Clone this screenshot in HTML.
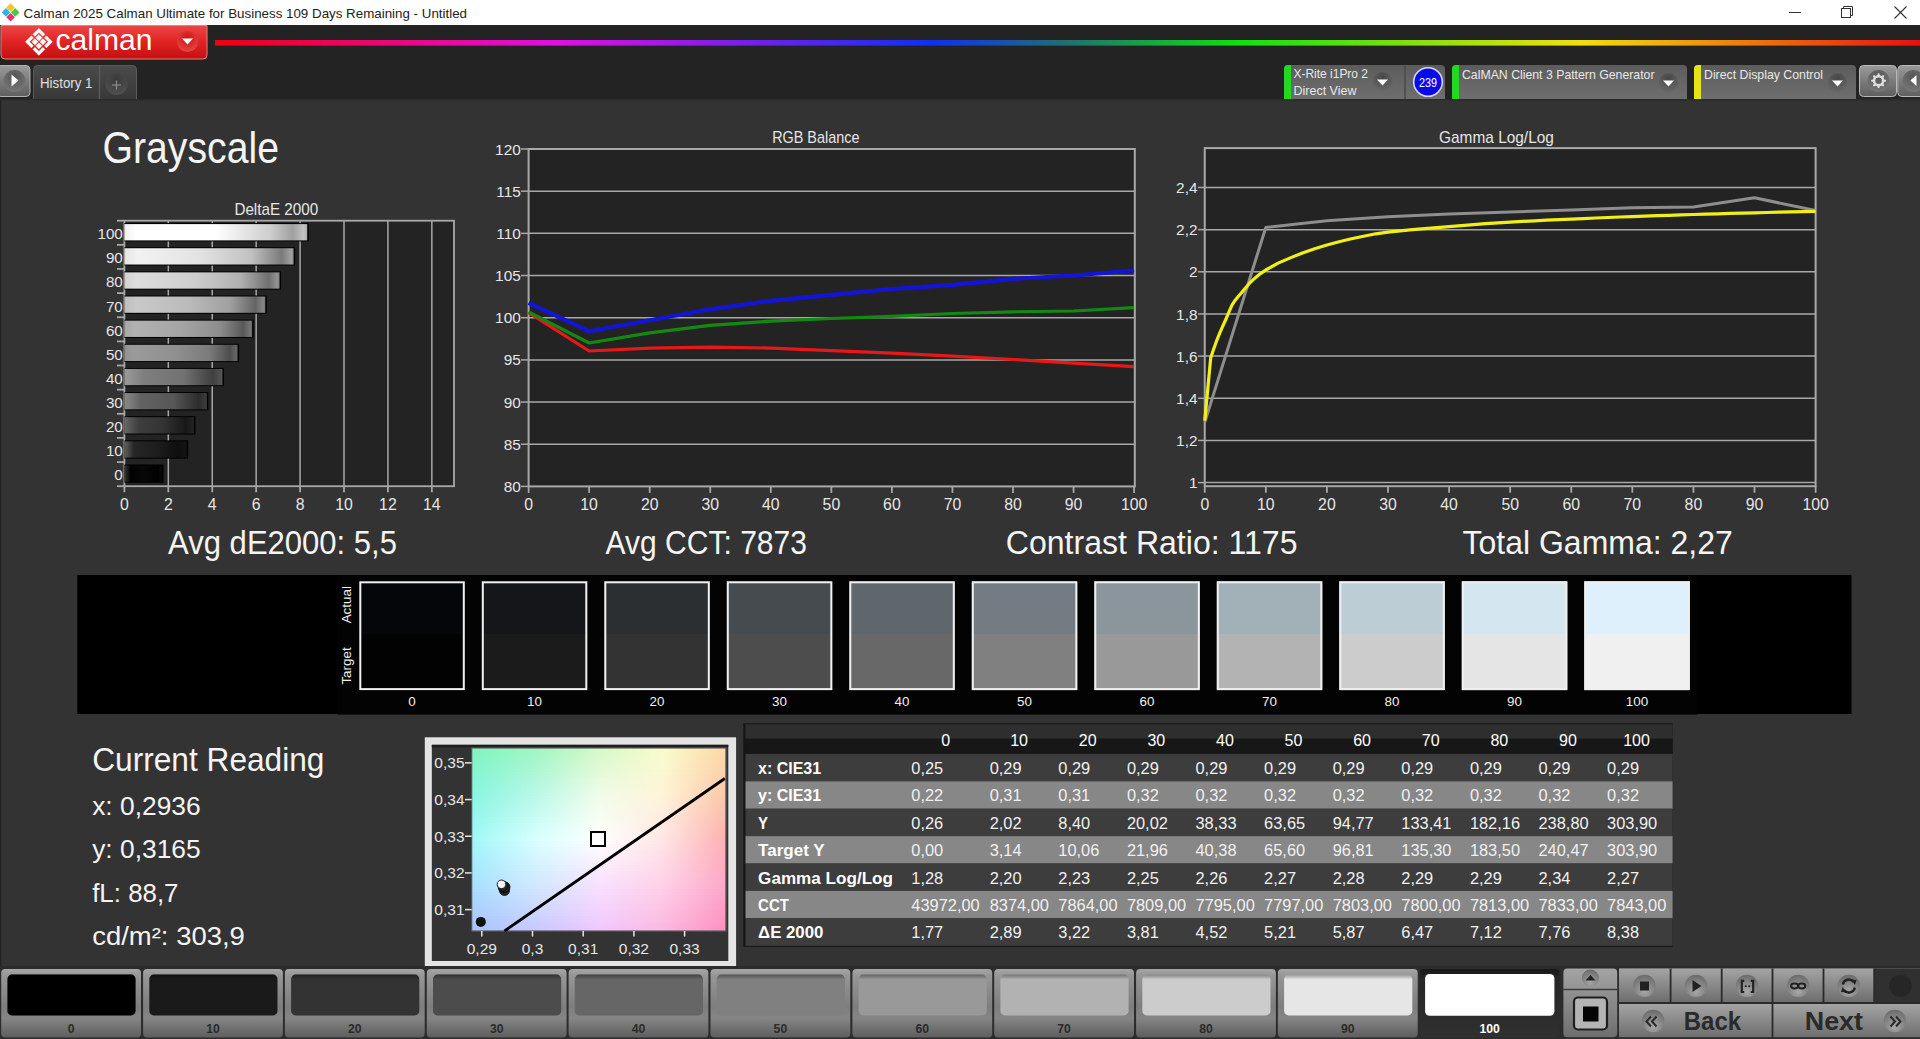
<!DOCTYPE html><html><head><meta charset="utf-8"><style>html,body{margin:0;padding:0;background:#333;overflow:hidden;width:1920px;height:1039px}svg{display:block;position:absolute;left:0;top:0}text{font-family:"Liberation Sans", sans-serif}</style></head><body><svg width="1920" height="1039" viewBox="0 0 1920 1039" font-family='"Liberation Sans", sans-serif'><defs><linearGradient id="gRed" x1="0" y1="0" x2="0" y2="1"><stop offset="0" stop-color="#ec4646"/><stop offset="0.5" stop-color="#e02222"/><stop offset="1" stop-color="#c41010"/></linearGradient><radialGradient id="gRedBtn" cx="0.5" cy="0.35" r="0.6"><stop offset="0" stop-color="#c81414"/><stop offset="1" stop-color="#e84040"/></radialGradient><linearGradient id="gRain" x1="215" y1="0" x2="1920" y2="0" gradientUnits="userSpaceOnUse"><stop offset="0" stop-color="#f00010"/><stop offset="0.2" stop-color="#e010e0"/><stop offset="0.42" stop-color="#1030f0"/><stop offset="0.5" stop-color="#207070"/><stop offset="0.6" stop-color="#10e010"/><stop offset="0.8" stop-color="#f0e010"/><stop offset="1" stop-color="#e81010"/></linearGradient><linearGradient id="gBtnGray" x1="0" y1="0" x2="0" y2="1"><stop offset="0" stop-color="#9a9a9a"/><stop offset="1" stop-color="#5e5e5e"/></linearGradient><radialGradient id="gCircDark" cx="0.5" cy="0.3" r="0.7"><stop offset="0" stop-color="#555"/><stop offset="1" stop-color="#777"/></radialGradient><linearGradient id="gTab" x1="0" y1="0" x2="0" y2="1"><stop offset="0" stop-color="#4a4a4a"/><stop offset="1" stop-color="#383838"/></linearGradient><radialGradient id="gCircTab" cx="0.5" cy="0.3" r="0.7"><stop offset="0" stop-color="#3a3a3a"/><stop offset="1" stop-color="#505050"/></radialGradient><linearGradient id="gDev" x1="0" y1="0" x2="0" y2="1"><stop offset="0" stop-color="#5c5c5c"/><stop offset="1" stop-color="#6e6e6e"/></linearGradient><radialGradient id="gDrop" cx="0.5" cy="0.25" r="0.75"><stop offset="0" stop-color="#474747"/><stop offset="1" stop-color="#6a6a6a"/></radialGradient><linearGradient id="gBar0" x1="0" y1="0" x2="1" y2="0"><stop offset="0" stop-color="#3c3c3c"/><stop offset="0.06" stop-color="#232323"/><stop offset="0.16" stop-color="#020202"/><stop offset="0.5" stop-color="#080808"/><stop offset="0.9" stop-color="#000000"/><stop offset="1" stop-color="#0c0c0c"/></linearGradient><linearGradient id="gBar1" x1="0" y1="0" x2="1" y2="0"><stop offset="0" stop-color="#5f5f5f"/><stop offset="0.04" stop-color="#525252"/><stop offset="0.15" stop-color="#262626"/><stop offset="0.5" stop-color="#1e1e1e"/><stop offset="0.85" stop-color="#0e0e0e"/><stop offset="1" stop-color="#141414"/></linearGradient><linearGradient id="gBar2" x1="0" y1="0" x2="1" y2="0"><stop offset="0" stop-color="#6c6c6c"/><stop offset="0.05" stop-color="#5c5c5c"/><stop offset="0.2" stop-color="#3e3e3e"/><stop offset="0.55" stop-color="#343434"/><stop offset="0.88" stop-color="#181818"/><stop offset="1" stop-color="#242424"/></linearGradient><linearGradient id="gBar3" x1="0" y1="0" x2="1" y2="0"><stop offset="0" stop-color="#878787"/><stop offset="0.05" stop-color="#808080"/><stop offset="0.2" stop-color="#626262"/><stop offset="0.6" stop-color="#565656"/><stop offset="0.9" stop-color="#2c2c2c"/><stop offset="1" stop-color="#3e3e3e"/></linearGradient><linearGradient id="gBar4" x1="0" y1="0" x2="1" y2="0"><stop offset="0" stop-color="#989898"/><stop offset="0.05" stop-color="#949494"/><stop offset="0.2" stop-color="#7e7e7e"/><stop offset="0.6" stop-color="#727272"/><stop offset="0.9" stop-color="#404040"/><stop offset="1" stop-color="#565656"/></linearGradient><linearGradient id="gBar5" x1="0" y1="0" x2="1" y2="0"><stop offset="0" stop-color="#929292"/><stop offset="0.08" stop-color="#9a9a9a"/><stop offset="0.45" stop-color="#909090"/><stop offset="0.75" stop-color="#7b7b7b"/><stop offset="0.93" stop-color="#4e4e4e"/><stop offset="0.985" stop-color="#666666"/><stop offset="1" stop-color="#5a5a5a"/></linearGradient><linearGradient id="gBar6" x1="0" y1="0" x2="1" y2="0"><stop offset="0" stop-color="#a7a7a7"/><stop offset="0.08" stop-color="#b1b1b1"/><stop offset="0.45" stop-color="#a5a5a5"/><stop offset="0.75" stop-color="#8d8d8d"/><stop offset="0.93" stop-color="#595959"/><stop offset="0.985" stop-color="#757575"/><stop offset="1" stop-color="#676767"/></linearGradient><linearGradient id="gBar7" x1="0" y1="0" x2="1" y2="0"><stop offset="0" stop-color="#bdbdbd"/><stop offset="0.08" stop-color="#c9c9c9"/><stop offset="0.45" stop-color="#bbbbbb"/><stop offset="0.75" stop-color="#a0a0a0"/><stop offset="0.93" stop-color="#656565"/><stop offset="0.985" stop-color="#858585"/><stop offset="1" stop-color="#757575"/></linearGradient><linearGradient id="gBar8" x1="0" y1="0" x2="1" y2="0"><stop offset="0" stop-color="#d1d1d1"/><stop offset="0.08" stop-color="#dddddd"/><stop offset="0.45" stop-color="#cecece"/><stop offset="0.75" stop-color="#b0b0b0"/><stop offset="0.93" stop-color="#707070"/><stop offset="0.985" stop-color="#929292"/><stop offset="1" stop-color="#818181"/></linearGradient><linearGradient id="gBar9" x1="0" y1="0" x2="1" y2="0"><stop offset="0" stop-color="#e4e4e4"/><stop offset="0.08" stop-color="#f2f2f2"/><stop offset="0.45" stop-color="#e2e2e2"/><stop offset="0.75" stop-color="#c1c1c1"/><stop offset="0.93" stop-color="#7a7a7a"/><stop offset="0.985" stop-color="#a0a0a0"/><stop offset="1" stop-color="#8d8d8d"/></linearGradient><linearGradient id="gBar10" x1="0" y1="0" x2="1" y2="0"><stop offset="0" stop-color="#f0f0f0"/><stop offset="0.06" stop-color="#ffffff"/><stop offset="0.5" stop-color="#ffffff"/><stop offset="0.8" stop-color="#cdcdcd"/><stop offset="0.92" stop-color="#a0a0a0"/><stop offset="0.98" stop-color="#c3c3c3"/><stop offset="1" stop-color="#afafaf"/></linearGradient><linearGradient id="gCie0" x1="0" y1="0" x2="1" y2="0"><stop offset="0" stop-color="#7ff5c1"/><stop offset="0.25" stop-color="#a1f5c1"/><stop offset="0.5" stop-color="#d6f8c9"/><stop offset="0.75" stop-color="#f8fccc"/><stop offset="1.0" stop-color="#fcd8a6"/></linearGradient><linearGradient id="gCie1" x1="0" y1="0" x2="1" y2="0"><stop offset="0" stop-color="#80f5c3"/><stop offset="0.25" stop-color="#a2f5c4"/><stop offset="0.5" stop-color="#d8f8cb"/><stop offset="0.75" stop-color="#f9fbcd"/><stop offset="1.0" stop-color="#fcd7a6"/></linearGradient><linearGradient id="gCie2" x1="0" y1="0" x2="1" y2="0"><stop offset="0" stop-color="#80f5c5"/><stop offset="0.25" stop-color="#a4f5c7"/><stop offset="0.5" stop-color="#d9f9cd"/><stop offset="0.75" stop-color="#f9fbce"/><stop offset="1.0" stop-color="#fcd6a6"/></linearGradient><linearGradient id="gCie3" x1="0" y1="0" x2="1" y2="0"><stop offset="0" stop-color="#81f5c7"/><stop offset="0.25" stop-color="#a6f6c9"/><stop offset="0.5" stop-color="#dbf9cf"/><stop offset="0.75" stop-color="#fafacf"/><stop offset="1.0" stop-color="#fcd5a6"/></linearGradient><linearGradient id="gCie4" x1="0" y1="0" x2="1" y2="0"><stop offset="0" stop-color="#82f5c9"/><stop offset="0.25" stop-color="#a7f6cc"/><stop offset="0.5" stop-color="#ddf9d1"/><stop offset="0.75" stop-color="#fafad0"/><stop offset="1.0" stop-color="#fcd4a7"/></linearGradient><linearGradient id="gCie5" x1="0" y1="0" x2="1" y2="0"><stop offset="0" stop-color="#82f5cc"/><stop offset="0.25" stop-color="#a9f6ce"/><stop offset="0.5" stop-color="#dff9d4"/><stop offset="0.75" stop-color="#fbf9d0"/><stop offset="1.0" stop-color="#fcd3a7"/></linearGradient><linearGradient id="gCie6" x1="0" y1="0" x2="1" y2="0"><stop offset="0" stop-color="#83f5ce"/><stop offset="0.25" stop-color="#aaf6d1"/><stop offset="0.5" stop-color="#e1fad6"/><stop offset="0.75" stop-color="#fbf9d1"/><stop offset="1.0" stop-color="#fcd2a7"/></linearGradient><linearGradient id="gCie7" x1="0" y1="0" x2="1" y2="0"><stop offset="0" stop-color="#83f5d0"/><stop offset="0.25" stop-color="#acf6d4"/><stop offset="0.5" stop-color="#e2fad8"/><stop offset="0.75" stop-color="#fbf8d2"/><stop offset="1.0" stop-color="#fcd1a7"/></linearGradient><linearGradient id="gCie8" x1="0" y1="0" x2="1" y2="0"><stop offset="0" stop-color="#84f5d2"/><stop offset="0.25" stop-color="#adf7d6"/><stop offset="0.5" stop-color="#e4fada"/><stop offset="0.75" stop-color="#fcf8d3"/><stop offset="1.0" stop-color="#fcd0a7"/></linearGradient><linearGradient id="gCie9" x1="0" y1="0" x2="1" y2="0"><stop offset="0" stop-color="#85f5d4"/><stop offset="0.25" stop-color="#aff7d9"/><stop offset="0.5" stop-color="#e6fadc"/><stop offset="0.75" stop-color="#fcf7d3"/><stop offset="1.0" stop-color="#fccea7"/></linearGradient><linearGradient id="gCie10" x1="0" y1="0" x2="1" y2="0"><stop offset="0" stop-color="#85f5d6"/><stop offset="0.25" stop-color="#b1f7dc"/><stop offset="0.5" stop-color="#e8fbde"/><stop offset="0.75" stop-color="#fdf6d4"/><stop offset="1.0" stop-color="#fccda7"/></linearGradient><linearGradient id="gCie11" x1="0" y1="0" x2="1" y2="0"><stop offset="0" stop-color="#86f5d8"/><stop offset="0.25" stop-color="#b2f7de"/><stop offset="0.5" stop-color="#e9fbe0"/><stop offset="0.75" stop-color="#fdf6d5"/><stop offset="1.0" stop-color="#fccca8"/></linearGradient><linearGradient id="gCie12" x1="0" y1="0" x2="1" y2="0"><stop offset="0" stop-color="#86f5da"/><stop offset="0.25" stop-color="#b4f7e1"/><stop offset="0.5" stop-color="#ebfbe2"/><stop offset="0.75" stop-color="#fef5d6"/><stop offset="1.0" stop-color="#fccba8"/></linearGradient><linearGradient id="gCie13" x1="0" y1="0" x2="1" y2="0"><stop offset="0" stop-color="#87f5dc"/><stop offset="0.25" stop-color="#b5f8e3"/><stop offset="0.5" stop-color="#edfce4"/><stop offset="0.75" stop-color="#fef5d7"/><stop offset="1.0" stop-color="#fccaa8"/></linearGradient><linearGradient id="gCie14" x1="0" y1="0" x2="1" y2="0"><stop offset="0" stop-color="#88f5de"/><stop offset="0.25" stop-color="#b7f8e6"/><stop offset="0.5" stop-color="#effce6"/><stop offset="0.75" stop-color="#fff4d7"/><stop offset="1.0" stop-color="#fcc9a8"/></linearGradient><linearGradient id="gCie15" x1="0" y1="0" x2="1" y2="0"><stop offset="0" stop-color="#88f5e0"/><stop offset="0.25" stop-color="#b9f8e8"/><stop offset="0.5" stop-color="#f0fce8"/><stop offset="0.75" stop-color="#fff4d8"/><stop offset="1.0" stop-color="#fcc8a8"/></linearGradient><linearGradient id="gCie16" x1="0" y1="0" x2="1" y2="0"><stop offset="0" stop-color="#8af5e2"/><stop offset="0.25" stop-color="#bbf9ea"/><stop offset="0.5" stop-color="#f1fcea"/><stop offset="0.75" stop-color="#fff3d9"/><stop offset="1.0" stop-color="#fcc6a9"/></linearGradient><linearGradient id="gCie17" x1="0" y1="0" x2="1" y2="0"><stop offset="0" stop-color="#8cf5e4"/><stop offset="0.25" stop-color="#bdf9eb"/><stop offset="0.5" stop-color="#f2fceb"/><stop offset="0.75" stop-color="#fff2da"/><stop offset="1.0" stop-color="#fcc4a9"/></linearGradient><linearGradient id="gCie18" x1="0" y1="0" x2="1" y2="0"><stop offset="0" stop-color="#8df6e5"/><stop offset="0.25" stop-color="#bff9ed"/><stop offset="0.5" stop-color="#f3fded"/><stop offset="0.75" stop-color="#fff1db"/><stop offset="1.0" stop-color="#fcc3aa"/></linearGradient><linearGradient id="gCie19" x1="0" y1="0" x2="1" y2="0"><stop offset="0" stop-color="#8ff6e7"/><stop offset="0.25" stop-color="#c1faee"/><stop offset="0.5" stop-color="#f4fdee"/><stop offset="0.75" stop-color="#fff0dc"/><stop offset="1.0" stop-color="#fcc1aa"/></linearGradient><linearGradient id="gCie20" x1="0" y1="0" x2="1" y2="0"><stop offset="0" stop-color="#90f6e8"/><stop offset="0.25" stop-color="#c3faf0"/><stop offset="0.5" stop-color="#f5fdf0"/><stop offset="0.75" stop-color="#ffefdd"/><stop offset="1.0" stop-color="#fcc0ab"/></linearGradient><linearGradient id="gCie21" x1="0" y1="0" x2="1" y2="0"><stop offset="0" stop-color="#92f6ea"/><stop offset="0.25" stop-color="#c5fbf1"/><stop offset="0.5" stop-color="#f6fdf1"/><stop offset="0.75" stop-color="#ffeede"/><stop offset="1.0" stop-color="#fcbeab"/></linearGradient><linearGradient id="gCie22" x1="0" y1="0" x2="1" y2="0"><stop offset="0" stop-color="#93f6eb"/><stop offset="0.25" stop-color="#c7fbf3"/><stop offset="0.5" stop-color="#f7fdf3"/><stop offset="0.75" stop-color="#ffeddf"/><stop offset="1.0" stop-color="#fcbdac"/></linearGradient><linearGradient id="gCie23" x1="0" y1="0" x2="1" y2="0"><stop offset="0" stop-color="#95f7ed"/><stop offset="0.25" stop-color="#c9fcf4"/><stop offset="0.5" stop-color="#f8fef4"/><stop offset="0.75" stop-color="#ffece0"/><stop offset="1.0" stop-color="#fcbbac"/></linearGradient><linearGradient id="gCie24" x1="0" y1="0" x2="1" y2="0"><stop offset="0" stop-color="#97f7ef"/><stop offset="0.25" stop-color="#cbfcf6"/><stop offset="0.5" stop-color="#f9fef6"/><stop offset="0.75" stop-color="#ffece0"/><stop offset="1.0" stop-color="#fcb9ad"/></linearGradient><linearGradient id="gCie25" x1="0" y1="0" x2="1" y2="0"><stop offset="0" stop-color="#98f7f0"/><stop offset="0.25" stop-color="#cefdf7"/><stop offset="0.5" stop-color="#fafef7"/><stop offset="0.75" stop-color="#ffebe1"/><stop offset="1.0" stop-color="#fcb8ad"/></linearGradient><linearGradient id="gCie26" x1="0" y1="0" x2="1" y2="0"><stop offset="0" stop-color="#9af7f2"/><stop offset="0.25" stop-color="#d0fdf9"/><stop offset="0.5" stop-color="#fbfef9"/><stop offset="0.75" stop-color="#ffeae2"/><stop offset="1.0" stop-color="#fcb6ae"/></linearGradient><linearGradient id="gCie27" x1="0" y1="0" x2="1" y2="0"><stop offset="0" stop-color="#9bf7f3"/><stop offset="0.25" stop-color="#d2fefa"/><stop offset="0.5" stop-color="#fcfefa"/><stop offset="0.75" stop-color="#ffe9e3"/><stop offset="1.0" stop-color="#fcb5ae"/></linearGradient><linearGradient id="gCie28" x1="0" y1="0" x2="1" y2="0"><stop offset="0" stop-color="#9df8f5"/><stop offset="0.25" stop-color="#d4fefc"/><stop offset="0.5" stop-color="#fdfffc"/><stop offset="0.75" stop-color="#ffe8e4"/><stop offset="1.0" stop-color="#fcb3af"/></linearGradient><linearGradient id="gCie29" x1="0" y1="0" x2="1" y2="0"><stop offset="0" stop-color="#9ef8f6"/><stop offset="0.25" stop-color="#d6fffd"/><stop offset="0.5" stop-color="#fefffd"/><stop offset="0.75" stop-color="#ffe7e5"/><stop offset="1.0" stop-color="#fcb2af"/></linearGradient><linearGradient id="gCie30" x1="0" y1="0" x2="1" y2="0"><stop offset="0" stop-color="#a0f8f8"/><stop offset="0.25" stop-color="#d8ffff"/><stop offset="0.5" stop-color="#ffffff"/><stop offset="0.75" stop-color="#ffe6e6"/><stop offset="1.0" stop-color="#fcb0b0"/></linearGradient><linearGradient id="gCie31" x1="0" y1="0" x2="1" y2="0"><stop offset="0" stop-color="#a1f6f8"/><stop offset="0.25" stop-color="#d7fdff"/><stop offset="0.5" stop-color="#fffdff"/><stop offset="0.75" stop-color="#ffe5e6"/><stop offset="1.0" stop-color="#fcafb2"/></linearGradient><linearGradient id="gCie32" x1="0" y1="0" x2="1" y2="0"><stop offset="0" stop-color="#a1f5f9"/><stop offset="0.25" stop-color="#d7fcff"/><stop offset="0.5" stop-color="#fefbff"/><stop offset="0.75" stop-color="#ffe3e6"/><stop offset="1.0" stop-color="#fcafb3"/></linearGradient><linearGradient id="gCie33" x1="0" y1="0" x2="1" y2="0"><stop offset="0" stop-color="#a2f3f9"/><stop offset="0.25" stop-color="#d6faff"/><stop offset="0.5" stop-color="#fef9ff"/><stop offset="0.75" stop-color="#ffe2e6"/><stop offset="1.0" stop-color="#fcaeb5"/></linearGradient><linearGradient id="gCie34" x1="0" y1="0" x2="1" y2="0"><stop offset="0" stop-color="#a2f2fa"/><stop offset="0.25" stop-color="#d6f9ff"/><stop offset="0.5" stop-color="#fdf7ff"/><stop offset="0.75" stop-color="#ffe0e7"/><stop offset="1.0" stop-color="#fcaeb6"/></linearGradient><linearGradient id="gCie35" x1="0" y1="0" x2="1" y2="0"><stop offset="0" stop-color="#a3f0fa"/><stop offset="0.25" stop-color="#d5f7ff"/><stop offset="0.5" stop-color="#fdf5ff"/><stop offset="0.75" stop-color="#ffdfe7"/><stop offset="1.0" stop-color="#fcadb8"/></linearGradient><linearGradient id="gCie36" x1="0" y1="0" x2="1" y2="0"><stop offset="0" stop-color="#a3effb"/><stop offset="0.25" stop-color="#d5f6ff"/><stop offset="0.5" stop-color="#fcf3ff"/><stop offset="0.75" stop-color="#ffdde7"/><stop offset="1.0" stop-color="#fcadb9"/></linearGradient><linearGradient id="gCie37" x1="0" y1="0" x2="1" y2="0"><stop offset="0" stop-color="#a4edfb"/><stop offset="0.25" stop-color="#d4f4ff"/><stop offset="0.5" stop-color="#fcf1ff"/><stop offset="0.75" stop-color="#ffdce7"/><stop offset="1.0" stop-color="#fcacbb"/></linearGradient><linearGradient id="gCie38" x1="0" y1="0" x2="1" y2="0"><stop offset="0" stop-color="#a4ebfc"/><stop offset="0.25" stop-color="#d4f3ff"/><stop offset="0.5" stop-color="#fbefff"/><stop offset="0.75" stop-color="#ffdae7"/><stop offset="1.0" stop-color="#fcacbd"/></linearGradient><linearGradient id="gCie39" x1="0" y1="0" x2="1" y2="0"><stop offset="0" stop-color="#a5eafc"/><stop offset="0.25" stop-color="#d3f1ff"/><stop offset="0.5" stop-color="#fbedff"/><stop offset="0.75" stop-color="#ffd9e7"/><stop offset="1.0" stop-color="#fcabbe"/></linearGradient><linearGradient id="gCie40" x1="0" y1="0" x2="1" y2="0"><stop offset="0" stop-color="#a5e8fd"/><stop offset="0.25" stop-color="#d3f0ff"/><stop offset="0.5" stop-color="#faebff"/><stop offset="0.75" stop-color="#ffd8e7"/><stop offset="1.0" stop-color="#fcabc0"/></linearGradient><linearGradient id="gCie41" x1="0" y1="0" x2="1" y2="0"><stop offset="0" stop-color="#a6e7fd"/><stop offset="0.25" stop-color="#d2eeff"/><stop offset="0.5" stop-color="#fae9ff"/><stop offset="0.75" stop-color="#ffd6e7"/><stop offset="1.0" stop-color="#fcaac1"/></linearGradient><linearGradient id="gCie42" x1="0" y1="0" x2="1" y2="0"><stop offset="0" stop-color="#a6e5fe"/><stop offset="0.25" stop-color="#d2edff"/><stop offset="0.5" stop-color="#f9e7ff"/><stop offset="0.75" stop-color="#ffd5e8"/><stop offset="1.0" stop-color="#fcaac3"/></linearGradient><linearGradient id="gCie43" x1="0" y1="0" x2="1" y2="0"><stop offset="0" stop-color="#a7e4fe"/><stop offset="0.25" stop-color="#d1ebff"/><stop offset="0.5" stop-color="#f9e5ff"/><stop offset="0.75" stop-color="#ffd3e8"/><stop offset="1.0" stop-color="#fca9c4"/></linearGradient><linearGradient id="gCie44" x1="0" y1="0" x2="1" y2="0"><stop offset="0" stop-color="#a7e2fe"/><stop offset="0.25" stop-color="#d1eaff"/><stop offset="0.5" stop-color="#f9e3ff"/><stop offset="0.75" stop-color="#ffd2e8"/><stop offset="1.0" stop-color="#fca9c6"/></linearGradient><linearGradient id="gCie45" x1="0" y1="0" x2="1" y2="0"><stop offset="0" stop-color="#a8e0ff"/><stop offset="0.25" stop-color="#d0e8ff"/><stop offset="0.5" stop-color="#f8e1ff"/><stop offset="0.75" stop-color="#ffd0e8"/><stop offset="1.0" stop-color="#fca8c8"/></linearGradient><linearGradient id="gCie46" x1="0" y1="0" x2="1" y2="0"><stop offset="0" stop-color="#a8dfff"/><stop offset="0.25" stop-color="#d0e6ff"/><stop offset="0.5" stop-color="#f8dfff"/><stop offset="0.75" stop-color="#ffcfe8"/><stop offset="1.0" stop-color="#fca7c8"/></linearGradient><linearGradient id="gCie47" x1="0" y1="0" x2="1" y2="0"><stop offset="0" stop-color="#a8ddff"/><stop offset="0.25" stop-color="#cfe4ff"/><stop offset="0.5" stop-color="#f7ddff"/><stop offset="0.75" stop-color="#ffcde7"/><stop offset="1.0" stop-color="#fca5c7"/></linearGradient><linearGradient id="gCie48" x1="0" y1="0" x2="1" y2="0"><stop offset="0" stop-color="#a8dbfe"/><stop offset="0.25" stop-color="#cfe2ff"/><stop offset="0.5" stop-color="#f7dcff"/><stop offset="0.75" stop-color="#fecce7"/><stop offset="1.0" stop-color="#fca4c7"/></linearGradient><linearGradient id="gCie49" x1="0" y1="0" x2="1" y2="0"><stop offset="0" stop-color="#a8d9fe"/><stop offset="0.25" stop-color="#cee0ff"/><stop offset="0.5" stop-color="#f6daff"/><stop offset="0.75" stop-color="#fecae6"/><stop offset="1.0" stop-color="#fca2c6"/></linearGradient><linearGradient id="gCie50" x1="0" y1="0" x2="1" y2="0"><stop offset="0" stop-color="#a8d7fe"/><stop offset="0.25" stop-color="#cedeff"/><stop offset="0.5" stop-color="#f6d9ff"/><stop offset="0.75" stop-color="#fec9e6"/><stop offset="1.0" stop-color="#fca1c6"/></linearGradient><linearGradient id="gCie51" x1="0" y1="0" x2="1" y2="0"><stop offset="0" stop-color="#a8d5fe"/><stop offset="0.25" stop-color="#cddcff"/><stop offset="0.5" stop-color="#f5d7ff"/><stop offset="0.75" stop-color="#fec7e5"/><stop offset="1.0" stop-color="#fc9fc5"/></linearGradient><linearGradient id="gCie52" x1="0" y1="0" x2="1" y2="0"><stop offset="0" stop-color="#a8d4fe"/><stop offset="0.25" stop-color="#ccdaff"/><stop offset="0.5" stop-color="#f4d5ff"/><stop offset="0.75" stop-color="#fec5e4"/><stop offset="1.0" stop-color="#fc9dc4"/></linearGradient><linearGradient id="gCie53" x1="0" y1="0" x2="1" y2="0"><stop offset="0" stop-color="#a8d2fd"/><stop offset="0.25" stop-color="#ccd8ff"/><stop offset="0.5" stop-color="#f4d4ff"/><stop offset="0.75" stop-color="#fdc4e4"/><stop offset="1.0" stop-color="#fc9cc4"/></linearGradient><linearGradient id="gCie54" x1="0" y1="0" x2="1" y2="0"><stop offset="0" stop-color="#a8d0fd"/><stop offset="0.25" stop-color="#cbd6ff"/><stop offset="0.5" stop-color="#f3d2ff"/><stop offset="0.75" stop-color="#fdc2e3"/><stop offset="1.0" stop-color="#fc9ac3"/></linearGradient><linearGradient id="gCie55" x1="0" y1="0" x2="1" y2="0"><stop offset="0" stop-color="#a8cefd"/><stop offset="0.25" stop-color="#cbd4ff"/><stop offset="0.5" stop-color="#f3d1ff"/><stop offset="0.75" stop-color="#fdc1e3"/><stop offset="1.0" stop-color="#fc99c3"/></linearGradient><linearGradient id="gCie56" x1="0" y1="0" x2="1" y2="0"><stop offset="0" stop-color="#a8ccfd"/><stop offset="0.25" stop-color="#cad1ff"/><stop offset="0.5" stop-color="#f2cfff"/><stop offset="0.75" stop-color="#fdbfe2"/><stop offset="1.0" stop-color="#fc97c2"/></linearGradient><linearGradient id="gCie57" x1="0" y1="0" x2="1" y2="0"><stop offset="0" stop-color="#a8cafd"/><stop offset="0.25" stop-color="#cacfff"/><stop offset="0.5" stop-color="#f2ceff"/><stop offset="0.75" stop-color="#fdbee2"/><stop offset="1.0" stop-color="#fc96c2"/></linearGradient><linearGradient id="gCie58" x1="0" y1="0" x2="1" y2="0"><stop offset="0" stop-color="#a8c9fc"/><stop offset="0.25" stop-color="#c9cdff"/><stop offset="0.5" stop-color="#f1ccff"/><stop offset="0.75" stop-color="#fcbce1"/><stop offset="1.0" stop-color="#fc94c1"/></linearGradient><linearGradient id="gCie59" x1="0" y1="0" x2="1" y2="0"><stop offset="0" stop-color="#a8c7fc"/><stop offset="0.25" stop-color="#c9cbff"/><stop offset="0.5" stop-color="#f1caff"/><stop offset="0.75" stop-color="#fcbae1"/><stop offset="1.0" stop-color="#fc92c1"/></linearGradient><linearGradient id="gCie60" x1="0" y1="0" x2="1" y2="0"><stop offset="0" stop-color="#a8c5fc"/><stop offset="0.25" stop-color="#c8c9ff"/><stop offset="0.5" stop-color="#f0c9ff"/><stop offset="0.75" stop-color="#fcb9e0"/><stop offset="1.0" stop-color="#fc91c0"/></linearGradient><linearGradient id="gBB" x1="0" y1="0" x2="0" y2="1"><stop offset="0" stop-color="#a6a6a6"/><stop offset="0.1" stop-color="#969696"/><stop offset="0.55" stop-color="#7e7e7e"/><stop offset="0.72" stop-color="#858585"/><stop offset="1" stop-color="#5e5e5e"/></linearGradient><linearGradient id="gBBsel" x1="0" y1="0" x2="0" y2="1"><stop offset="0" stop-color="#181818"/><stop offset="0.15" stop-color="#262626"/><stop offset="1" stop-color="#303030"/></linearGradient><linearGradient id="gSwShade" x1="0" y1="0" x2="0" y2="1"><stop offset="0" stop-color="#000" stop-opacity="0.35"/><stop offset="0.12" stop-color="#000" stop-opacity="0"/></linearGradient><linearGradient id="gCtl" x1="0" y1="0" x2="0" y2="1"><stop offset="0" stop-color="#a4a4a4"/><stop offset="1" stop-color="#6e6e6e"/></linearGradient><radialGradient id="gIco" cx="0.5" cy="0.75" r="0.75"><stop offset="0" stop-color="#a8a8a8"/><stop offset="1" stop-color="#6a6a6a"/></radialGradient></defs><rect x="0.00" y="0.00" width="1920.00" height="1039.00" fill="#333333"/>
<rect x="0.00" y="0.00" width="1920.00" height="25.00" fill="#ffffff"/>
<rect x="0.00" y="25.00" width="1920.00" height="75.00" fill="#232323"/>
<polygon points="10.6,3.3 14.899999999999999,7.6 10.6,11.899999999999999 6.3,7.6" fill="#f5c524"/>
<polygon points="15.2,8.100000000000001 19.5,12.4 15.2,16.7 10.899999999999999,12.4" fill="#3fcf3f"/>
<polygon points="10.6,12.899999999999999 14.899999999999999,17.2 10.6,21.5 6.3,17.2" fill="#e8336b"/>
<polygon points="6.0,8.100000000000001 10.3,12.4 6.0,16.7 1.7000000000000002,12.4" fill="#2fb2e8"/>
<text x="23.5" y="17.5" font-size="13.60" fill="#222" text-anchor="start" font-weight="normal" textLength="443.5" lengthAdjust="spacingAndGlyphs">Calman 2025 Calman Ultimate for Business 109 Days Remaining  - Untitled</text>
<line x1="1789.00" y1="12.50" x2="1801.00" y2="12.50" stroke="#333" stroke-width="1"/>
<rect x="1841.5" y="8.5" width="9" height="9" fill="none" stroke="#333" stroke-width="1"/>
<polyline points="1843.5,8.5 1843.5,6.5 1852.5,6.5 1852.5,15.5 1850.5,15.5" fill="none" stroke="#333" stroke-width="1"/>
<line x1="1894.50" y1="6.50" x2="1906.50" y2="18.50" stroke="#333" stroke-width="1.1"/>
<line x1="1906.50" y1="6.50" x2="1894.50" y2="18.50" stroke="#333" stroke-width="1.1"/>
<path d="M1,25.5 H207 V55 Q207,59 203,59 H5 Q1,59 1,55 Z" fill="url(#gRed)" stroke="#e88080" stroke-width="1"/>
<g transform="translate(38.9,41.8) rotate(45)" fill="#fff" stroke="#fff" stroke-width="0.3" stroke-linejoin="round"><polygon points="-9.60,-9.60 -1.00,-9.60 -1.00,-6.60 -6.60,-6.60 -6.60,-1.00 -9.60,-1.00"/><polygon points="9.60,-9.60 1.00,-9.60 1.00,-6.60 6.60,-6.60 6.60,-1.00 9.60,-1.00"/><polygon points="9.60,9.60 1.00,9.60 1.00,6.60 6.60,6.60 6.60,1.00 9.60,1.00"/><polygon points="-9.60,9.60 -1.00,9.60 -1.00,6.60 -6.60,6.60 -6.60,1.00 -9.60,1.00"/><rect x="-5.10" y="-5.10" width="4.50" height="4.50"/><rect x="0.60" y="-5.10" width="4.50" height="4.50"/><rect x="0.60" y="0.60" width="4.50" height="4.50"/><rect x="-5.10" y="0.60" width="4.50" height="4.50"/></g>
<text x="55.5" y="49.5" font-size="30.00" fill="#fff" text-anchor="start" font-weight="normal" textLength="97.0" lengthAdjust="spacingAndGlyphs">calman</text>
<circle cx="187.5" cy="41.5" r="10.5" fill="url(#gRedBtn)"/>
<polygon points="182,38.5 193,38.5 187.5,44.5" fill="#fff"/>
<rect x="215.00" y="40.00" width="1705.00" height="5.60" fill="url(#gRain)"/>
<rect x="-3" y="65.5" width="33" height="31" rx="4" fill="url(#gBtnGray)" stroke="#b0b0b0" stroke-width="1"/>
<circle cx="14.5" cy="81" r="11" fill="url(#gCircDark)"/>
<polygon points="11.5,74.5 11.5,86.5 18.5,80.5" fill="#fff"/>
<path d="M33.5,99.5 V69.5 Q33.5,65.5 37.5,65.5 H132.5 Q136.5,65.5 136.5,69.5 V99.5" fill="url(#gTab)" stroke="#5a5a5a" stroke-width="1"/>
<line x1="99.50" y1="66.00" x2="99.50" y2="99.00" stroke="#5a5a5a" stroke-width="1.5"/>
<text x="40.0" y="88.2" font-size="14.30" fill="#e0e0e0" text-anchor="start" font-weight="normal" textLength="52.5" lengthAdjust="spacingAndGlyphs">History 1</text>
<circle cx="116.5" cy="84" r="11" fill="url(#gCircTab)"/>
<line x1="112.00" y1="85.00" x2="121.00" y2="85.00" stroke="#8a8a8a" stroke-width="1.2"/>
<line x1="116.50" y1="80.50" x2="116.50" y2="89.50" stroke="#8a8a8a" stroke-width="1.2"/>
<path d="M1284,99 V69 Q1284,65 1288,65 H1441 Q1445,65 1445,69 V99 Z" fill="url(#gDev)"/>
<path d="M1284,99 V69 Q1284,65 1288,65 H1291 V99 Z" fill="#22d822"/>
<line x1="1405.00" y1="66.00" x2="1405.00" y2="99.00" stroke="#4a4a4a" stroke-width="1.5"/>
<text x="1293.5" y="78.2" font-size="12.60" fill="#e8e8e8" text-anchor="start" font-weight="normal" textLength="74.5" lengthAdjust="spacingAndGlyphs">X-Rite i1Pro 2</text>
<text x="1293.5" y="94.5" font-size="12.60" fill="#e8e8e8" text-anchor="start" font-weight="normal" textLength="63.0" lengthAdjust="spacingAndGlyphs">Direct View</text>
<circle cx="1382.5" cy="82" r="10" fill="url(#gDrop)"/>
<polygon points="1377.0,79.5 1388.0,79.5 1382.5,85.5" fill="#fff"/>
<circle cx="1428" cy="82" r="14.3" fill="#0a0ae8" stroke="#d8d8ff" stroke-width="1.5"/>
<text x="1428.0" y="86.5" font-size="12.50" fill="#fff" text-anchor="middle" font-weight="normal" textLength="18.0" lengthAdjust="spacingAndGlyphs">239</text>
<path d="M1452,99 V69 Q1452,65 1456,65 H1683 Q1687,65 1687,69 V99 Z" fill="url(#gDev)"/>
<path d="M1452,99 V69 Q1452,65 1456,65 H1459 V99 Z" fill="#22d822"/>
<text x="1462.0" y="78.5" font-size="12.60" fill="#e8e8e8" text-anchor="start" font-weight="normal" textLength="192.5" lengthAdjust="spacingAndGlyphs">CalMAN Client 3 Pattern Generator</text>
<circle cx="1668.5" cy="83" r="10" fill="url(#gDrop)"/>
<polygon points="1663.0,80.5 1674.0,80.5 1668.5,86.5" fill="#fff"/>
<path d="M1694,99 V69 Q1694,65 1698,65 H1852 Q1856,65 1856,69 V99 Z" fill="url(#gDev)"/>
<path d="M1694,99 V69 Q1694,65 1698,65 H1701 V99 Z" fill="#e4e414"/>
<text x="1704.0" y="78.5" font-size="12.60" fill="#e8e8e8" text-anchor="start" font-weight="normal" textLength="119.0" lengthAdjust="spacingAndGlyphs">Direct Display Control</text>
<circle cx="1837.5" cy="83" r="10" fill="url(#gDrop)"/>
<polygon points="1832.0,80.5 1843.0,80.5 1837.5,86.5" fill="#fff"/>
<rect x="1859.5" y="65.5" width="37" height="31" rx="4" fill="url(#gBtnGray)" stroke="#b8b8b8" stroke-width="1"/>
<circle cx="1878.5" cy="81" r="11" fill="url(#gCircDark)"/>
<polygon points="1877.0,76.2 1877.8999999999999,73.3 1879.3,73.3 1880.1999999999998,76.2" fill="#dedede" transform="rotate(0 1878.6 80.7)"/><polygon points="1877.0,76.2 1877.8999999999999,73.3 1879.3,73.3 1880.1999999999998,76.2" fill="#dedede" transform="rotate(45 1878.6 80.7)"/><polygon points="1877.0,76.2 1877.8999999999999,73.3 1879.3,73.3 1880.1999999999998,76.2" fill="#dedede" transform="rotate(90 1878.6 80.7)"/><polygon points="1877.0,76.2 1877.8999999999999,73.3 1879.3,73.3 1880.1999999999998,76.2" fill="#dedede" transform="rotate(135 1878.6 80.7)"/><polygon points="1877.0,76.2 1877.8999999999999,73.3 1879.3,73.3 1880.1999999999998,76.2" fill="#dedede" transform="rotate(180 1878.6 80.7)"/><polygon points="1877.0,76.2 1877.8999999999999,73.3 1879.3,73.3 1880.1999999999998,76.2" fill="#dedede" transform="rotate(225 1878.6 80.7)"/><polygon points="1877.0,76.2 1877.8999999999999,73.3 1879.3,73.3 1880.1999999999998,76.2" fill="#dedede" transform="rotate(270 1878.6 80.7)"/><polygon points="1877.0,76.2 1877.8999999999999,73.3 1879.3,73.3 1880.1999999999998,76.2" fill="#dedede" transform="rotate(315 1878.6 80.7)"/>
<circle cx="1878.6" cy="80.7" r="4.5" fill="none" stroke="#dedede" stroke-width="2.4"/>
<rect x="1897.8" y="65.5" width="30" height="31" rx="4" fill="url(#gBtnGray)" stroke="#b8b8b8" stroke-width="1"/>
<circle cx="1913.5" cy="81" r="11" fill="url(#gCircDark)"/>
<polygon points="1916.5,75 1916.5,86 1910.3,80.5" fill="#fff"/>
<rect x="0.00" y="99.00" width="1920.00" height="1.50" fill="#2b2b2b"/>
<rect x="0.00" y="100.00" width="1.30" height="866.00" fill="#222222"/>
<text x="102.5" y="162.6" font-size="45.00" fill="#f4f4f4" text-anchor="start" font-weight="normal" textLength="176.5" lengthAdjust="spacingAndGlyphs">Grayscale</text>
<text x="234.4" y="215.2" font-size="15.70" fill="#e6e6e6" text-anchor="start" font-weight="normal" textLength="83.8" lengthAdjust="spacingAndGlyphs">DeltaE 2000</text>
<rect x="124.40" y="220.70" width="329.60" height="265.50" fill="#232323"/>
<line x1="168.32" y1="220.70" x2="168.32" y2="486.20" stroke="#a8a8a8" stroke-width="1.5"/>
<line x1="212.24" y1="220.70" x2="212.24" y2="486.20" stroke="#a8a8a8" stroke-width="1.5"/>
<line x1="256.16" y1="220.70" x2="256.16" y2="486.20" stroke="#a8a8a8" stroke-width="1.5"/>
<line x1="300.08" y1="220.70" x2="300.08" y2="486.20" stroke="#a8a8a8" stroke-width="1.5"/>
<line x1="344.00" y1="220.70" x2="344.00" y2="486.20" stroke="#a8a8a8" stroke-width="1.5"/>
<line x1="387.92" y1="220.70" x2="387.92" y2="486.20" stroke="#a8a8a8" stroke-width="1.5"/>
<line x1="431.84" y1="220.70" x2="431.84" y2="486.20" stroke="#a8a8a8" stroke-width="1.5"/>
<rect x="124.4" y="220.7" width="329.6" height="265.5" fill="none" stroke="#a8a8a8" stroke-width="1.8"/>
<rect x="124.40" y="464.46" width="39.17" height="18.30" fill="#000"/>
<rect x="124.40" y="465.46" width="37.67" height="16.30" fill="url(#gBar0)"/>
<text x="122.8" y="480.4" font-size="15.20" fill="#e6e6e6" text-anchor="end" font-weight="normal">0</text>
<rect x="124.40" y="440.33" width="63.76" height="18.30" fill="#000"/>
<rect x="124.40" y="441.33" width="62.26" height="16.30" fill="url(#gBar1)"/>
<text x="122.8" y="456.3" font-size="15.20" fill="#e6e6e6" text-anchor="end" font-weight="normal">10</text>
<rect x="124.40" y="416.19" width="71.01" height="18.30" fill="#000"/>
<rect x="124.40" y="417.19" width="69.51" height="16.30" fill="url(#gBar2)"/>
<text x="122.8" y="432.2" font-size="15.20" fill="#e6e6e6" text-anchor="end" font-weight="normal">20</text>
<rect x="124.40" y="392.05" width="83.97" height="18.30" fill="#000"/>
<rect x="124.40" y="393.05" width="82.47" height="16.30" fill="url(#gBar3)"/>
<text x="122.8" y="408.0" font-size="15.20" fill="#e6e6e6" text-anchor="end" font-weight="normal">30</text>
<rect x="124.40" y="367.92" width="99.56" height="18.30" fill="#000"/>
<rect x="124.40" y="368.92" width="98.06" height="16.30" fill="url(#gBar4)"/>
<text x="122.8" y="383.9" font-size="15.20" fill="#e6e6e6" text-anchor="end" font-weight="normal">40</text>
<rect x="124.40" y="343.78" width="114.71" height="18.30" fill="#000"/>
<rect x="124.40" y="344.78" width="113.21" height="16.30" fill="url(#gBar5)"/>
<text x="122.8" y="359.8" font-size="15.20" fill="#e6e6e6" text-anchor="end" font-weight="normal">50</text>
<rect x="124.40" y="319.65" width="129.21" height="18.30" fill="#000"/>
<rect x="124.40" y="320.65" width="127.71" height="16.30" fill="url(#gBar6)"/>
<text x="122.8" y="335.6" font-size="15.20" fill="#e6e6e6" text-anchor="end" font-weight="normal">60</text>
<rect x="124.40" y="295.51" width="142.38" height="18.30" fill="#000"/>
<rect x="124.40" y="296.51" width="140.88" height="16.30" fill="url(#gBar7)"/>
<text x="122.8" y="311.5" font-size="15.20" fill="#e6e6e6" text-anchor="end" font-weight="normal">70</text>
<rect x="124.40" y="271.37" width="156.66" height="18.30" fill="#000"/>
<rect x="124.40" y="272.37" width="155.16" height="16.30" fill="url(#gBar8)"/>
<text x="122.8" y="287.3" font-size="15.20" fill="#e6e6e6" text-anchor="end" font-weight="normal">80</text>
<rect x="124.40" y="247.24" width="170.71" height="18.30" fill="#000"/>
<rect x="124.40" y="248.24" width="169.21" height="16.30" fill="url(#gBar9)"/>
<text x="122.8" y="263.2" font-size="15.20" fill="#e6e6e6" text-anchor="end" font-weight="normal">90</text>
<rect x="124.40" y="223.10" width="184.32" height="18.30" fill="#000"/>
<rect x="124.40" y="224.10" width="182.82" height="16.30" fill="url(#gBar10)"/>
<text x="122.8" y="239.1" font-size="15.20" fill="#e6e6e6" text-anchor="end" font-weight="normal">100</text>
<line x1="117.00" y1="220.70" x2="124.40" y2="220.70" stroke="#a8a8a8" stroke-width="1.8"/>
<line x1="117.00" y1="244.84" x2="124.40" y2="244.84" stroke="#a8a8a8" stroke-width="1.8"/>
<line x1="117.00" y1="268.97" x2="124.40" y2="268.97" stroke="#a8a8a8" stroke-width="1.8"/>
<line x1="117.00" y1="293.11" x2="124.40" y2="293.11" stroke="#a8a8a8" stroke-width="1.8"/>
<line x1="117.00" y1="317.25" x2="124.40" y2="317.25" stroke="#a8a8a8" stroke-width="1.8"/>
<line x1="117.00" y1="341.38" x2="124.40" y2="341.38" stroke="#a8a8a8" stroke-width="1.8"/>
<line x1="117.00" y1="365.52" x2="124.40" y2="365.52" stroke="#a8a8a8" stroke-width="1.8"/>
<line x1="117.00" y1="389.65" x2="124.40" y2="389.65" stroke="#a8a8a8" stroke-width="1.8"/>
<line x1="117.00" y1="413.79" x2="124.40" y2="413.79" stroke="#a8a8a8" stroke-width="1.8"/>
<line x1="117.00" y1="437.93" x2="124.40" y2="437.93" stroke="#a8a8a8" stroke-width="1.8"/>
<line x1="117.00" y1="462.06" x2="124.40" y2="462.06" stroke="#a8a8a8" stroke-width="1.8"/>
<line x1="117.00" y1="486.20" x2="124.40" y2="486.20" stroke="#a8a8a8" stroke-width="1.8"/>
<line x1="124.40" y1="486.20" x2="124.40" y2="492.20" stroke="#a8a8a8" stroke-width="1.8"/>
<text x="124.4" y="509.8" font-size="15.80" fill="#e6e6e6" text-anchor="middle" font-weight="normal">0</text>
<line x1="168.32" y1="486.20" x2="168.32" y2="492.20" stroke="#a8a8a8" stroke-width="1.8"/>
<text x="168.3" y="509.8" font-size="15.80" fill="#e6e6e6" text-anchor="middle" font-weight="normal">2</text>
<line x1="212.24" y1="486.20" x2="212.24" y2="492.20" stroke="#a8a8a8" stroke-width="1.8"/>
<text x="212.2" y="509.8" font-size="15.80" fill="#e6e6e6" text-anchor="middle" font-weight="normal">4</text>
<line x1="256.16" y1="486.20" x2="256.16" y2="492.20" stroke="#a8a8a8" stroke-width="1.8"/>
<text x="256.2" y="509.8" font-size="15.80" fill="#e6e6e6" text-anchor="middle" font-weight="normal">6</text>
<line x1="300.08" y1="486.20" x2="300.08" y2="492.20" stroke="#a8a8a8" stroke-width="1.8"/>
<text x="300.1" y="509.8" font-size="15.80" fill="#e6e6e6" text-anchor="middle" font-weight="normal">8</text>
<line x1="344.00" y1="486.20" x2="344.00" y2="492.20" stroke="#a8a8a8" stroke-width="1.8"/>
<text x="344.0" y="509.8" font-size="15.80" fill="#e6e6e6" text-anchor="middle" font-weight="normal">10</text>
<line x1="387.92" y1="486.20" x2="387.92" y2="492.20" stroke="#a8a8a8" stroke-width="1.8"/>
<text x="387.9" y="509.8" font-size="15.80" fill="#e6e6e6" text-anchor="middle" font-weight="normal">12</text>
<line x1="431.84" y1="486.20" x2="431.84" y2="492.20" stroke="#a8a8a8" stroke-width="1.8"/>
<text x="431.8" y="509.8" font-size="15.80" fill="#e6e6e6" text-anchor="middle" font-weight="normal">14</text>
<text x="772.2" y="142.8" font-size="15.90" fill="#e6e6e6" text-anchor="start" font-weight="normal" textLength="87.2" lengthAdjust="spacingAndGlyphs">RGB Balance</text>
<rect x="528.60" y="149.00" width="606.20" height="337.40" fill="#232323"/>
<line x1="528.60" y1="444.22" x2="1134.80" y2="444.22" stroke="#a8a8a8" stroke-width="1.5"/>
<line x1="528.60" y1="402.05" x2="1134.80" y2="402.05" stroke="#a8a8a8" stroke-width="1.5"/>
<line x1="528.60" y1="359.88" x2="1134.80" y2="359.88" stroke="#a8a8a8" stroke-width="1.5"/>
<line x1="528.60" y1="317.70" x2="1134.80" y2="317.70" stroke="#a8a8a8" stroke-width="1.5"/>
<line x1="528.60" y1="275.52" x2="1134.80" y2="275.52" stroke="#a8a8a8" stroke-width="1.5"/>
<line x1="528.60" y1="233.35" x2="1134.80" y2="233.35" stroke="#a8a8a8" stroke-width="1.5"/>
<line x1="528.60" y1="191.17" x2="1134.80" y2="191.17" stroke="#a8a8a8" stroke-width="1.5"/>
<rect x="528.6" y="149.0" width="606.1999999999999" height="337.4" fill="none" stroke="#a8a8a8" stroke-width="2"/>
<line x1="521.00" y1="486.40" x2="528.60" y2="486.40" stroke="#a8a8a8" stroke-width="1.5"/>
<text x="520.8" y="491.9" font-size="15.40" fill="#e6e6e6" text-anchor="end" font-weight="normal">80</text>
<line x1="521.00" y1="444.22" x2="528.60" y2="444.22" stroke="#a8a8a8" stroke-width="1.5"/>
<text x="520.8" y="449.7" font-size="15.40" fill="#e6e6e6" text-anchor="end" font-weight="normal">85</text>
<line x1="521.00" y1="402.05" x2="528.60" y2="402.05" stroke="#a8a8a8" stroke-width="1.5"/>
<text x="520.8" y="407.5" font-size="15.40" fill="#e6e6e6" text-anchor="end" font-weight="normal">90</text>
<line x1="521.00" y1="359.88" x2="528.60" y2="359.88" stroke="#a8a8a8" stroke-width="1.5"/>
<text x="520.8" y="365.4" font-size="15.40" fill="#e6e6e6" text-anchor="end" font-weight="normal">95</text>
<line x1="521.00" y1="317.70" x2="528.60" y2="317.70" stroke="#a8a8a8" stroke-width="1.5"/>
<text x="520.8" y="323.2" font-size="15.40" fill="#e6e6e6" text-anchor="end" font-weight="normal">100</text>
<line x1="521.00" y1="275.52" x2="528.60" y2="275.52" stroke="#a8a8a8" stroke-width="1.5"/>
<text x="520.8" y="281.0" font-size="15.40" fill="#e6e6e6" text-anchor="end" font-weight="normal">105</text>
<line x1="521.00" y1="233.35" x2="528.60" y2="233.35" stroke="#a8a8a8" stroke-width="1.5"/>
<text x="520.8" y="238.8" font-size="15.40" fill="#e6e6e6" text-anchor="end" font-weight="normal">110</text>
<line x1="521.00" y1="191.17" x2="528.60" y2="191.17" stroke="#a8a8a8" stroke-width="1.5"/>
<text x="520.8" y="196.7" font-size="15.40" fill="#e6e6e6" text-anchor="end" font-weight="normal">115</text>
<line x1="521.00" y1="149.00" x2="528.60" y2="149.00" stroke="#a8a8a8" stroke-width="1.5"/>
<text x="520.8" y="154.5" font-size="15.40" fill="#e6e6e6" text-anchor="end" font-weight="normal">120</text>
<line x1="528.60" y1="486.40" x2="528.60" y2="492.90" stroke="#a8a8a8" stroke-width="1.8"/>
<text x="528.6" y="510.0" font-size="15.80" fill="#e6e6e6" text-anchor="middle" font-weight="normal">0</text>
<line x1="589.15" y1="486.40" x2="589.15" y2="492.90" stroke="#a8a8a8" stroke-width="1.8"/>
<text x="589.1" y="510.0" font-size="15.80" fill="#e6e6e6" text-anchor="middle" font-weight="normal">10</text>
<line x1="649.70" y1="486.40" x2="649.70" y2="492.90" stroke="#a8a8a8" stroke-width="1.8"/>
<text x="649.7" y="510.0" font-size="15.80" fill="#e6e6e6" text-anchor="middle" font-weight="normal">20</text>
<line x1="710.25" y1="486.40" x2="710.25" y2="492.90" stroke="#a8a8a8" stroke-width="1.8"/>
<text x="710.2" y="510.0" font-size="15.80" fill="#e6e6e6" text-anchor="middle" font-weight="normal">30</text>
<line x1="770.80" y1="486.40" x2="770.80" y2="492.90" stroke="#a8a8a8" stroke-width="1.8"/>
<text x="770.8" y="510.0" font-size="15.80" fill="#e6e6e6" text-anchor="middle" font-weight="normal">40</text>
<line x1="831.35" y1="486.40" x2="831.35" y2="492.90" stroke="#a8a8a8" stroke-width="1.8"/>
<text x="831.4" y="510.0" font-size="15.80" fill="#e6e6e6" text-anchor="middle" font-weight="normal">50</text>
<line x1="891.90" y1="486.40" x2="891.90" y2="492.90" stroke="#a8a8a8" stroke-width="1.8"/>
<text x="891.9" y="510.0" font-size="15.80" fill="#e6e6e6" text-anchor="middle" font-weight="normal">60</text>
<line x1="952.45" y1="486.40" x2="952.45" y2="492.90" stroke="#a8a8a8" stroke-width="1.8"/>
<text x="952.5" y="510.0" font-size="15.80" fill="#e6e6e6" text-anchor="middle" font-weight="normal">70</text>
<line x1="1013.00" y1="486.40" x2="1013.00" y2="492.90" stroke="#a8a8a8" stroke-width="1.8"/>
<text x="1013.0" y="510.0" font-size="15.80" fill="#e6e6e6" text-anchor="middle" font-weight="normal">80</text>
<line x1="1073.55" y1="486.40" x2="1073.55" y2="492.90" stroke="#a8a8a8" stroke-width="1.8"/>
<text x="1073.5" y="510.0" font-size="15.80" fill="#e6e6e6" text-anchor="middle" font-weight="normal">90</text>
<line x1="1134.10" y1="486.40" x2="1134.10" y2="492.90" stroke="#a8a8a8" stroke-width="1.8"/>
<text x="1134.1" y="510.0" font-size="15.80" fill="#e6e6e6" text-anchor="middle" font-weight="normal">100</text>
<polyline points="528.6,312.6 589.1,351.0 649.7,348.1 710.2,347.2 770.8,348.1 831.4,350.6 891.9,353.1 952.5,356.1 1013.0,359.5 1073.5,363.2 1134.1,366.6" fill="none" stroke="#e81818" stroke-width="3.2" stroke-linejoin="round"/>
<polyline points="528.6,311.8 589.1,343.0 649.7,332.9 710.2,325.3 770.8,321.1 831.4,318.5 891.9,316.4 952.5,313.5 1013.0,311.8 1073.5,311.0 1134.1,307.6" fill="none" stroke="#128a12" stroke-width="3.2" stroke-linejoin="round"/>
<polyline points="528.6,302.9 589.1,331.2 649.7,320.2 710.2,309.3 770.8,300.8 831.4,294.9 891.9,289.0 952.5,284.8 1013.0,278.9 1073.5,275.5 1134.1,270.5" fill="none" stroke="#1414d8" stroke-width="4.2" stroke-linejoin="round"/>
<text x="1439.0" y="142.8" font-size="15.90" fill="#e6e6e6" text-anchor="start" font-weight="normal" textLength="114.9" lengthAdjust="spacingAndGlyphs">Gamma Log/Log</text>
<rect x="1204.75" y="148.10" width="610.85" height="338.10" fill="#232323"/>
<line x1="1204.75" y1="482.60" x2="1815.60" y2="482.60" stroke="#a8a8a8" stroke-width="1.5"/>
<line x1="1198.00" y1="482.60" x2="1204.75" y2="482.60" stroke="#a8a8a8" stroke-width="1.5"/>
<text x="1197.5" y="488.1" font-size="15.40" fill="#e6e6e6" text-anchor="end" font-weight="normal">1</text>
<line x1="1204.75" y1="440.44" x2="1815.60" y2="440.44" stroke="#a8a8a8" stroke-width="1.5"/>
<line x1="1198.00" y1="440.44" x2="1204.75" y2="440.44" stroke="#a8a8a8" stroke-width="1.5"/>
<text x="1197.5" y="445.9" font-size="15.40" fill="#e6e6e6" text-anchor="end" font-weight="normal">1,2</text>
<line x1="1204.75" y1="398.28" x2="1815.60" y2="398.28" stroke="#a8a8a8" stroke-width="1.5"/>
<line x1="1198.00" y1="398.28" x2="1204.75" y2="398.28" stroke="#a8a8a8" stroke-width="1.5"/>
<text x="1197.5" y="403.8" font-size="15.40" fill="#e6e6e6" text-anchor="end" font-weight="normal">1,4</text>
<line x1="1204.75" y1="356.12" x2="1815.60" y2="356.12" stroke="#a8a8a8" stroke-width="1.5"/>
<line x1="1198.00" y1="356.12" x2="1204.75" y2="356.12" stroke="#a8a8a8" stroke-width="1.5"/>
<text x="1197.5" y="361.6" font-size="15.40" fill="#e6e6e6" text-anchor="end" font-weight="normal">1,6</text>
<line x1="1204.75" y1="313.96" x2="1815.60" y2="313.96" stroke="#a8a8a8" stroke-width="1.5"/>
<line x1="1198.00" y1="313.96" x2="1204.75" y2="313.96" stroke="#a8a8a8" stroke-width="1.5"/>
<text x="1197.5" y="319.5" font-size="15.40" fill="#e6e6e6" text-anchor="end" font-weight="normal">1,8</text>
<line x1="1204.75" y1="271.80" x2="1815.60" y2="271.80" stroke="#a8a8a8" stroke-width="1.5"/>
<line x1="1198.00" y1="271.80" x2="1204.75" y2="271.80" stroke="#a8a8a8" stroke-width="1.5"/>
<text x="1197.5" y="277.3" font-size="15.40" fill="#e6e6e6" text-anchor="end" font-weight="normal">2</text>
<line x1="1204.75" y1="229.64" x2="1815.60" y2="229.64" stroke="#a8a8a8" stroke-width="1.5"/>
<line x1="1198.00" y1="229.64" x2="1204.75" y2="229.64" stroke="#a8a8a8" stroke-width="1.5"/>
<text x="1197.5" y="235.1" font-size="15.40" fill="#e6e6e6" text-anchor="end" font-weight="normal">2,2</text>
<line x1="1204.75" y1="187.48" x2="1815.60" y2="187.48" stroke="#a8a8a8" stroke-width="1.5"/>
<line x1="1198.00" y1="187.48" x2="1204.75" y2="187.48" stroke="#a8a8a8" stroke-width="1.5"/>
<text x="1197.5" y="193.0" font-size="15.40" fill="#e6e6e6" text-anchor="end" font-weight="normal">2,4</text>
<rect x="1204.75" y="148.1" width="610.8499999999999" height="338.1" fill="none" stroke="#a8a8a8" stroke-width="2"/>
<line x1="1204.75" y1="486.20" x2="1204.75" y2="492.70" stroke="#a8a8a8" stroke-width="1.8"/>
<text x="1204.8" y="510.0" font-size="15.80" fill="#e6e6e6" text-anchor="middle" font-weight="normal">0</text>
<line x1="1265.84" y1="486.20" x2="1265.84" y2="492.70" stroke="#a8a8a8" stroke-width="1.8"/>
<text x="1265.8" y="510.0" font-size="15.80" fill="#e6e6e6" text-anchor="middle" font-weight="normal">10</text>
<line x1="1326.92" y1="486.20" x2="1326.92" y2="492.70" stroke="#a8a8a8" stroke-width="1.8"/>
<text x="1326.9" y="510.0" font-size="15.80" fill="#e6e6e6" text-anchor="middle" font-weight="normal">20</text>
<line x1="1388.00" y1="486.20" x2="1388.00" y2="492.70" stroke="#a8a8a8" stroke-width="1.8"/>
<text x="1388.0" y="510.0" font-size="15.80" fill="#e6e6e6" text-anchor="middle" font-weight="normal">30</text>
<line x1="1449.09" y1="486.20" x2="1449.09" y2="492.70" stroke="#a8a8a8" stroke-width="1.8"/>
<text x="1449.1" y="510.0" font-size="15.80" fill="#e6e6e6" text-anchor="middle" font-weight="normal">40</text>
<line x1="1510.17" y1="486.20" x2="1510.17" y2="492.70" stroke="#a8a8a8" stroke-width="1.8"/>
<text x="1510.2" y="510.0" font-size="15.80" fill="#e6e6e6" text-anchor="middle" font-weight="normal">50</text>
<line x1="1571.26" y1="486.20" x2="1571.26" y2="492.70" stroke="#a8a8a8" stroke-width="1.8"/>
<text x="1571.3" y="510.0" font-size="15.80" fill="#e6e6e6" text-anchor="middle" font-weight="normal">60</text>
<line x1="1632.34" y1="486.20" x2="1632.34" y2="492.70" stroke="#a8a8a8" stroke-width="1.8"/>
<text x="1632.3" y="510.0" font-size="15.80" fill="#e6e6e6" text-anchor="middle" font-weight="normal">70</text>
<line x1="1693.43" y1="486.20" x2="1693.43" y2="492.70" stroke="#a8a8a8" stroke-width="1.8"/>
<text x="1693.4" y="510.0" font-size="15.80" fill="#e6e6e6" text-anchor="middle" font-weight="normal">80</text>
<line x1="1754.51" y1="486.20" x2="1754.51" y2="492.70" stroke="#a8a8a8" stroke-width="1.8"/>
<text x="1754.5" y="510.0" font-size="15.80" fill="#e6e6e6" text-anchor="middle" font-weight="normal">90</text>
<line x1="1815.60" y1="486.20" x2="1815.60" y2="492.70" stroke="#a8a8a8" stroke-width="1.8"/>
<text x="1815.6" y="510.0" font-size="15.80" fill="#e6e6e6" text-anchor="middle" font-weight="normal">100</text>
<polyline points="1204.8,422.1 1265.8,227.5 1326.9,220.8 1388.0,216.8 1449.1,214.0 1510.2,211.9 1571.3,210.0 1632.3,207.7 1693.4,206.9 1754.5,197.8 1815.6,210.5" fill="none" stroke="#8e8e8e" stroke-width="3" stroke-linejoin="round"/>
<polyline points="1204.8,420.6 1210.7,357.8 1213.8,348.7 1216.8,340.3 1219.9,332.6 1223.0,325.7 1226.0,319.0 1229.1,311.7 1232.1,304.9 1235.2,300.2 1238.2,296.5 1241.3,293.0 1244.3,289.3 1247.4,285.7 1250.4,282.3 1253.5,279.4 1256.6,276.7 1259.6,274.3 1262.7,272.1 1265.7,270.0 1265.8,270.0 1278.1,263.1 1290.3,257.9 1302.5,253.0 1314.7,248.8 1326.9,245.0 1339.1,241.7 1351.4,238.8 1363.6,236.2 1375.8,233.8 1388.0,232.1 1400.2,230.8 1412.4,229.7 1424.7,228.6 1436.9,227.6 1449.1,226.7 1461.3,225.7 1473.5,224.7 1485.7,223.7 1498.0,222.8 1510.2,222.1 1522.4,221.4 1534.6,220.8 1546.8,220.2 1559.0,219.6 1571.3,219.1 1583.5,218.6 1595.7,218.0 1607.9,217.5 1620.1,217.0 1632.3,216.6 1644.6,216.1 1656.8,215.7 1669.0,215.3 1681.2,214.8 1693.4,214.5 1705.6,214.1 1717.9,213.8 1730.1,213.4 1742.3,213.1 1754.5,212.8 1766.7,212.5 1778.9,212.2 1791.2,211.9 1803.4,211.6 1815.6,211.3" fill="none" stroke="#f0f018" stroke-width="3.2" stroke-linejoin="round"/>
<text x="168.1" y="553.9" font-size="32.50" fill="#f4f4f4" text-anchor="start" font-weight="normal" textLength="228.9" lengthAdjust="spacingAndGlyphs">Avg dE2000: 5,5</text>
<text x="605.6" y="553.8" font-size="32.50" fill="#f4f4f4" text-anchor="start" font-weight="normal" textLength="201.3" lengthAdjust="spacingAndGlyphs">Avg CCT: 7873</text>
<text x="1005.8" y="554.2" font-size="32.50" fill="#f4f4f4" text-anchor="start" font-weight="normal" textLength="291.7" lengthAdjust="spacingAndGlyphs">Contrast Ratio: 1175</text>
<text x="1462.5" y="554.0" font-size="32.50" fill="#f4f4f4" text-anchor="start" font-weight="normal" textLength="270.3" lengthAdjust="spacingAndGlyphs">Total Gamma: 2,27</text>
<rect x="77.30" y="575.00" width="1774.20" height="139.00" fill="#000"/>
<rect x="337.30" y="575.00" width="1360.00" height="139.60" fill="#030303"/>
<rect x="359.30" y="581.30" width="105.50" height="52.70" fill="#05060a"/>
<rect x="359.30" y="634.00" width="105.50" height="56.10" fill="#020202"/>
<rect x="360.3" y="582.3" width="103.5" height="106.8" fill="none" stroke="#f0f0f0" stroke-width="2"/>
<text x="412.1" y="705.5" font-size="13.40" fill="#f0f0f0" text-anchor="middle" font-weight="normal">0</text>
<rect x="481.80" y="581.30" width="105.50" height="52.70" fill="#141619"/>
<rect x="481.80" y="634.00" width="105.50" height="56.10" fill="#1b1b1b"/>
<rect x="482.8" y="582.3" width="103.5" height="106.8" fill="none" stroke="#f0f0f0" stroke-width="2"/>
<text x="534.5" y="705.5" font-size="13.40" fill="#f0f0f0" text-anchor="middle" font-weight="normal">10</text>
<rect x="604.30" y="581.30" width="105.50" height="52.70" fill="#2b2f32"/>
<rect x="604.30" y="634.00" width="105.50" height="56.10" fill="#333333"/>
<rect x="605.3" y="582.3" width="103.5" height="106.8" fill="none" stroke="#f0f0f0" stroke-width="2"/>
<text x="657.0" y="705.5" font-size="13.40" fill="#f0f0f0" text-anchor="middle" font-weight="normal">20</text>
<rect x="726.80" y="581.30" width="105.50" height="52.70" fill="#464b4f"/>
<rect x="726.80" y="634.00" width="105.50" height="56.10" fill="#4d4d4d"/>
<rect x="727.8" y="582.3" width="103.5" height="106.8" fill="none" stroke="#f0f0f0" stroke-width="2"/>
<text x="779.5" y="705.5" font-size="13.40" fill="#f0f0f0" text-anchor="middle" font-weight="normal">30</text>
<rect x="849.30" y="581.30" width="105.50" height="52.70" fill="#5f676d"/>
<rect x="849.30" y="634.00" width="105.50" height="56.10" fill="#686868"/>
<rect x="850.3" y="582.3" width="103.5" height="106.8" fill="none" stroke="#f0f0f0" stroke-width="2"/>
<text x="902.0" y="705.5" font-size="13.40" fill="#f0f0f0" text-anchor="middle" font-weight="normal">40</text>
<rect x="971.80" y="581.30" width="105.50" height="52.70" fill="#737c83"/>
<rect x="971.80" y="634.00" width="105.50" height="56.10" fill="#808080"/>
<rect x="972.8" y="582.3" width="103.5" height="106.8" fill="none" stroke="#f0f0f0" stroke-width="2"/>
<text x="1024.5" y="705.5" font-size="13.40" fill="#f0f0f0" text-anchor="middle" font-weight="normal">50</text>
<rect x="1094.30" y="581.30" width="105.50" height="52.70" fill="#8a959c"/>
<rect x="1094.30" y="634.00" width="105.50" height="56.10" fill="#999999"/>
<rect x="1095.3" y="582.3" width="103.5" height="106.8" fill="none" stroke="#f0f0f0" stroke-width="2"/>
<text x="1147.0" y="705.5" font-size="13.40" fill="#f0f0f0" text-anchor="middle" font-weight="normal">60</text>
<rect x="1216.80" y="581.30" width="105.50" height="52.70" fill="#a2b1b8"/>
<rect x="1216.80" y="634.00" width="105.50" height="56.10" fill="#b3b3b3"/>
<rect x="1217.8" y="582.3" width="103.5" height="106.8" fill="none" stroke="#f0f0f0" stroke-width="2"/>
<text x="1269.5" y="705.5" font-size="13.40" fill="#f0f0f0" text-anchor="middle" font-weight="normal">70</text>
<rect x="1339.30" y="581.30" width="105.50" height="52.70" fill="#bccdd6"/>
<rect x="1339.30" y="634.00" width="105.50" height="56.10" fill="#cccccc"/>
<rect x="1340.3" y="582.3" width="103.5" height="106.8" fill="none" stroke="#f0f0f0" stroke-width="2"/>
<text x="1392.0" y="705.5" font-size="13.40" fill="#f0f0f0" text-anchor="middle" font-weight="normal">80</text>
<rect x="1461.80" y="581.30" width="105.50" height="52.70" fill="#d4e6f0"/>
<rect x="1461.80" y="634.00" width="105.50" height="56.10" fill="#e5e5e5"/>
<rect x="1462.8" y="582.3" width="103.5" height="106.8" fill="none" stroke="#f0f0f0" stroke-width="2"/>
<text x="1514.5" y="705.5" font-size="13.40" fill="#f0f0f0" text-anchor="middle" font-weight="normal">90</text>
<rect x="1584.30" y="581.30" width="105.50" height="52.70" fill="#ddf0fb"/>
<rect x="1584.30" y="634.00" width="105.50" height="56.10" fill="#f0f0f0"/>
<rect x="1585.3" y="582.3" width="103.5" height="106.8" fill="none" stroke="#f0f0f0" stroke-width="2"/>
<text x="1637.0" y="705.5" font-size="13.40" fill="#f0f0f0" text-anchor="middle" font-weight="normal">100</text>
<text transform="translate(351.2,604.7) rotate(-90)" font-size="13.4" fill="#f0f0f0" text-anchor="middle">Actual</text>
<text transform="translate(351.2,666) rotate(-90)" font-size="13.4" fill="#f0f0f0" text-anchor="middle">Target</text>
<text x="92.2" y="771.0" font-size="32.30" fill="#f4f4f4" text-anchor="start" font-weight="normal" textLength="232.3" lengthAdjust="spacingAndGlyphs">Current Reading</text>
<text x="92.2" y="815.2" font-size="25.00" fill="#f4f4f4" text-anchor="start" font-weight="normal" textLength="108.4" lengthAdjust="spacingAndGlyphs">x: 0,2936</text>
<text x="92.2" y="858.3" font-size="25.00" fill="#f4f4f4" text-anchor="start" font-weight="normal" textLength="108.4" lengthAdjust="spacingAndGlyphs">y: 0,3165</text>
<text x="92.2" y="901.5" font-size="25.00" fill="#f4f4f4" text-anchor="start" font-weight="normal" textLength="86.3" lengthAdjust="spacingAndGlyphs">fL: 88,7</text>
<text x="92.2" y="944.6" font-size="25.00" fill="#f4f4f4" text-anchor="start" font-weight="normal" textLength="152.7" lengthAdjust="spacingAndGlyphs">cd/m²: 303,9</text>
<rect x="424.80" y="737.30" width="311.30" height="228.70" fill="#e4e4e4"/>
<rect x="431.80" y="744.80" width="296.50" height="216.20" fill="#333333"/>
<rect x="431.80" y="744.80" width="296.50" height="2.50" fill="#1e1e1e"/>
<rect x="471.70" y="748.00" width="254.20" height="3.00" fill="url(#gCie0)" shape-rendering="crispEdges"/>
<rect x="471.70" y="751.00" width="254.20" height="3.00" fill="url(#gCie1)" shape-rendering="crispEdges"/>
<rect x="471.70" y="754.00" width="254.20" height="3.00" fill="url(#gCie2)" shape-rendering="crispEdges"/>
<rect x="471.70" y="757.00" width="254.20" height="3.00" fill="url(#gCie3)" shape-rendering="crispEdges"/>
<rect x="471.70" y="760.00" width="254.20" height="3.00" fill="url(#gCie4)" shape-rendering="crispEdges"/>
<rect x="471.70" y="763.00" width="254.20" height="3.00" fill="url(#gCie5)" shape-rendering="crispEdges"/>
<rect x="471.70" y="766.00" width="254.20" height="3.00" fill="url(#gCie6)" shape-rendering="crispEdges"/>
<rect x="471.70" y="769.00" width="254.20" height="3.00" fill="url(#gCie7)" shape-rendering="crispEdges"/>
<rect x="471.70" y="772.00" width="254.20" height="3.00" fill="url(#gCie8)" shape-rendering="crispEdges"/>
<rect x="471.70" y="775.00" width="254.20" height="3.00" fill="url(#gCie9)" shape-rendering="crispEdges"/>
<rect x="471.70" y="778.00" width="254.20" height="3.00" fill="url(#gCie10)" shape-rendering="crispEdges"/>
<rect x="471.70" y="781.00" width="254.20" height="3.00" fill="url(#gCie11)" shape-rendering="crispEdges"/>
<rect x="471.70" y="784.00" width="254.20" height="3.00" fill="url(#gCie12)" shape-rendering="crispEdges"/>
<rect x="471.70" y="787.00" width="254.20" height="3.00" fill="url(#gCie13)" shape-rendering="crispEdges"/>
<rect x="471.70" y="790.00" width="254.20" height="3.00" fill="url(#gCie14)" shape-rendering="crispEdges"/>
<rect x="471.70" y="793.00" width="254.20" height="3.00" fill="url(#gCie15)" shape-rendering="crispEdges"/>
<rect x="471.70" y="796.00" width="254.20" height="3.00" fill="url(#gCie16)" shape-rendering="crispEdges"/>
<rect x="471.70" y="799.00" width="254.20" height="3.00" fill="url(#gCie17)" shape-rendering="crispEdges"/>
<rect x="471.70" y="802.00" width="254.20" height="3.00" fill="url(#gCie18)" shape-rendering="crispEdges"/>
<rect x="471.70" y="805.00" width="254.20" height="3.00" fill="url(#gCie19)" shape-rendering="crispEdges"/>
<rect x="471.70" y="808.00" width="254.20" height="3.00" fill="url(#gCie20)" shape-rendering="crispEdges"/>
<rect x="471.70" y="811.00" width="254.20" height="3.00" fill="url(#gCie21)" shape-rendering="crispEdges"/>
<rect x="471.70" y="814.00" width="254.20" height="3.00" fill="url(#gCie22)" shape-rendering="crispEdges"/>
<rect x="471.70" y="817.00" width="254.20" height="3.00" fill="url(#gCie23)" shape-rendering="crispEdges"/>
<rect x="471.70" y="820.00" width="254.20" height="3.00" fill="url(#gCie24)" shape-rendering="crispEdges"/>
<rect x="471.70" y="823.00" width="254.20" height="3.00" fill="url(#gCie25)" shape-rendering="crispEdges"/>
<rect x="471.70" y="826.00" width="254.20" height="3.00" fill="url(#gCie26)" shape-rendering="crispEdges"/>
<rect x="471.70" y="829.00" width="254.20" height="3.00" fill="url(#gCie27)" shape-rendering="crispEdges"/>
<rect x="471.70" y="832.00" width="254.20" height="3.00" fill="url(#gCie28)" shape-rendering="crispEdges"/>
<rect x="471.70" y="835.00" width="254.20" height="3.00" fill="url(#gCie29)" shape-rendering="crispEdges"/>
<rect x="471.70" y="838.00" width="254.20" height="3.00" fill="url(#gCie30)" shape-rendering="crispEdges"/>
<rect x="471.70" y="841.00" width="254.20" height="3.00" fill="url(#gCie31)" shape-rendering="crispEdges"/>
<rect x="471.70" y="844.00" width="254.20" height="3.00" fill="url(#gCie32)" shape-rendering="crispEdges"/>
<rect x="471.70" y="847.00" width="254.20" height="3.00" fill="url(#gCie33)" shape-rendering="crispEdges"/>
<rect x="471.70" y="850.00" width="254.20" height="3.00" fill="url(#gCie34)" shape-rendering="crispEdges"/>
<rect x="471.70" y="853.00" width="254.20" height="3.00" fill="url(#gCie35)" shape-rendering="crispEdges"/>
<rect x="471.70" y="856.00" width="254.20" height="3.00" fill="url(#gCie36)" shape-rendering="crispEdges"/>
<rect x="471.70" y="859.00" width="254.20" height="3.00" fill="url(#gCie37)" shape-rendering="crispEdges"/>
<rect x="471.70" y="862.00" width="254.20" height="3.00" fill="url(#gCie38)" shape-rendering="crispEdges"/>
<rect x="471.70" y="865.00" width="254.20" height="3.00" fill="url(#gCie39)" shape-rendering="crispEdges"/>
<rect x="471.70" y="868.00" width="254.20" height="3.00" fill="url(#gCie40)" shape-rendering="crispEdges"/>
<rect x="471.70" y="871.00" width="254.20" height="3.00" fill="url(#gCie41)" shape-rendering="crispEdges"/>
<rect x="471.70" y="874.00" width="254.20" height="3.00" fill="url(#gCie42)" shape-rendering="crispEdges"/>
<rect x="471.70" y="877.00" width="254.20" height="3.00" fill="url(#gCie43)" shape-rendering="crispEdges"/>
<rect x="471.70" y="880.00" width="254.20" height="3.00" fill="url(#gCie44)" shape-rendering="crispEdges"/>
<rect x="471.70" y="883.00" width="254.20" height="3.00" fill="url(#gCie45)" shape-rendering="crispEdges"/>
<rect x="471.70" y="886.00" width="254.20" height="3.00" fill="url(#gCie46)" shape-rendering="crispEdges"/>
<rect x="471.70" y="889.00" width="254.20" height="3.00" fill="url(#gCie47)" shape-rendering="crispEdges"/>
<rect x="471.70" y="892.00" width="254.20" height="3.00" fill="url(#gCie48)" shape-rendering="crispEdges"/>
<rect x="471.70" y="895.00" width="254.20" height="3.00" fill="url(#gCie49)" shape-rendering="crispEdges"/>
<rect x="471.70" y="898.00" width="254.20" height="3.00" fill="url(#gCie50)" shape-rendering="crispEdges"/>
<rect x="471.70" y="901.00" width="254.20" height="3.00" fill="url(#gCie51)" shape-rendering="crispEdges"/>
<rect x="471.70" y="904.00" width="254.20" height="3.00" fill="url(#gCie52)" shape-rendering="crispEdges"/>
<rect x="471.70" y="907.00" width="254.20" height="3.00" fill="url(#gCie53)" shape-rendering="crispEdges"/>
<rect x="471.70" y="910.00" width="254.20" height="3.00" fill="url(#gCie54)" shape-rendering="crispEdges"/>
<rect x="471.70" y="913.00" width="254.20" height="3.00" fill="url(#gCie55)" shape-rendering="crispEdges"/>
<rect x="471.70" y="916.00" width="254.20" height="3.00" fill="url(#gCie56)" shape-rendering="crispEdges"/>
<rect x="471.70" y="919.00" width="254.20" height="3.00" fill="url(#gCie57)" shape-rendering="crispEdges"/>
<rect x="471.70" y="922.00" width="254.20" height="3.00" fill="url(#gCie58)" shape-rendering="crispEdges"/>
<rect x="471.70" y="925.00" width="254.20" height="3.00" fill="url(#gCie59)" shape-rendering="crispEdges"/>
<rect x="471.70" y="928.00" width="254.20" height="3.00" fill="url(#gCie60)" shape-rendering="crispEdges"/>
<rect x="471.7" y="748.0" width="254.2" height="183.0" fill="none" stroke="#5a5a5a" stroke-width="1.2"/>
<line x1="504.50" y1="931.00" x2="724.80" y2="778.50" stroke="#000" stroke-width="2.8"/>
<rect x="591" y="832" width="14" height="14" fill="#fff" stroke="#000" stroke-width="2"/>
<circle cx="480.8" cy="921.9" r="5" fill="#111"/>
<circle cx="504.5" cy="890.5" r="5" fill="#2a2a2a" stroke="#000" stroke-width="0.8"/>
<circle cx="503.5" cy="888" r="5" fill="#2a2a2a" stroke="#000" stroke-width="0.8"/>
<circle cx="505" cy="887" r="5" fill="#2a2a2a" stroke="#000" stroke-width="0.8"/>
<circle cx="503" cy="886" r="5" fill="#2a2a2a" stroke="#000" stroke-width="0.8"/>
<circle cx="501.5" cy="884.3" r="4.3" fill="#f4f4f4" stroke="#222" stroke-width="1"/>
<line x1="465.00" y1="762.88" x2="471.70" y2="762.88" stroke="#e6e6e6" stroke-width="1.5"/>
<text x="464.5" y="768.4" font-size="15.50" fill="#e6e6e6" text-anchor="end" font-weight="normal">0,35</text>
<line x1="465.00" y1="799.56" x2="471.70" y2="799.56" stroke="#e6e6e6" stroke-width="1.5"/>
<text x="464.5" y="805.1" font-size="15.50" fill="#e6e6e6" text-anchor="end" font-weight="normal">0,34</text>
<line x1="465.00" y1="836.24" x2="471.70" y2="836.24" stroke="#e6e6e6" stroke-width="1.5"/>
<text x="464.5" y="841.7" font-size="15.50" fill="#e6e6e6" text-anchor="end" font-weight="normal">0,33</text>
<line x1="465.00" y1="872.92" x2="471.70" y2="872.92" stroke="#e6e6e6" stroke-width="1.5"/>
<text x="464.5" y="878.4" font-size="15.50" fill="#e6e6e6" text-anchor="end" font-weight="normal">0,32</text>
<line x1="465.00" y1="909.60" x2="471.70" y2="909.60" stroke="#e6e6e6" stroke-width="1.5"/>
<text x="464.5" y="915.1" font-size="15.50" fill="#e6e6e6" text-anchor="end" font-weight="normal">0,31</text>
<line x1="481.80" y1="931.00" x2="481.80" y2="936.50" stroke="#e6e6e6" stroke-width="1.5"/>
<text x="481.8" y="953.6" font-size="15.50" fill="#e6e6e6" text-anchor="middle" font-weight="normal">0,29</text>
<line x1="532.50" y1="931.00" x2="532.50" y2="936.50" stroke="#e6e6e6" stroke-width="1.5"/>
<text x="532.5" y="953.6" font-size="15.50" fill="#e6e6e6" text-anchor="middle" font-weight="normal">0,3</text>
<line x1="583.20" y1="931.00" x2="583.20" y2="936.50" stroke="#e6e6e6" stroke-width="1.5"/>
<text x="583.2" y="953.6" font-size="15.50" fill="#e6e6e6" text-anchor="middle" font-weight="normal">0,31</text>
<line x1="633.90" y1="931.00" x2="633.90" y2="936.50" stroke="#e6e6e6" stroke-width="1.5"/>
<text x="633.9" y="953.6" font-size="15.50" fill="#e6e6e6" text-anchor="middle" font-weight="normal">0,32</text>
<line x1="684.60" y1="931.00" x2="684.60" y2="936.50" stroke="#e6e6e6" stroke-width="1.5"/>
<text x="684.6" y="953.6" font-size="15.50" fill="#e6e6e6" text-anchor="middle" font-weight="normal">0,33</text>
<rect x="743.30" y="723.30" width="929.30" height="223.50" fill="#161616"/>
<rect x="745.50" y="724.30" width="927.10" height="14.50" fill="#2e2e2e"/>
<rect x="745.50" y="738.80" width="927.10" height="15.10" fill="#171717"/>
<rect x="745.50" y="753.90" width="927.10" height="27.50" fill="#3d3d3d"/>
<text x="758.1" y="774.0" font-size="16.00" fill="#ffffff" text-anchor="start" font-weight="bold" textLength="62.9" lengthAdjust="spacingAndGlyphs">x: CIE31</text>
<text x="911.3" y="774.0" font-size="16.40" fill="#f0f0f0" text-anchor="start" font-weight="normal">0,25</text>
<text x="989.7" y="774.0" font-size="16.40" fill="#f0f0f0" text-anchor="start" font-weight="normal">0,29</text>
<text x="1058.3" y="774.0" font-size="16.40" fill="#f0f0f0" text-anchor="start" font-weight="normal">0,29</text>
<text x="1126.9" y="774.0" font-size="16.40" fill="#f0f0f0" text-anchor="start" font-weight="normal">0,29</text>
<text x="1195.5" y="774.0" font-size="16.40" fill="#f0f0f0" text-anchor="start" font-weight="normal">0,29</text>
<text x="1264.1" y="774.0" font-size="16.40" fill="#f0f0f0" text-anchor="start" font-weight="normal">0,29</text>
<text x="1332.7" y="774.0" font-size="16.40" fill="#f0f0f0" text-anchor="start" font-weight="normal">0,29</text>
<text x="1401.3" y="774.0" font-size="16.40" fill="#f0f0f0" text-anchor="start" font-weight="normal">0,29</text>
<text x="1469.9" y="774.0" font-size="16.40" fill="#f0f0f0" text-anchor="start" font-weight="normal">0,29</text>
<text x="1538.5" y="774.0" font-size="16.40" fill="#f0f0f0" text-anchor="start" font-weight="normal">0,29</text>
<text x="1607.1" y="774.0" font-size="16.40" fill="#f0f0f0" text-anchor="start" font-weight="normal">0,29</text>
<rect x="745.50" y="781.30" width="927.10" height="27.50" fill="#878787"/>
<text x="758.1" y="801.4" font-size="16.00" fill="#ffffff" text-anchor="start" font-weight="bold" textLength="62.9" lengthAdjust="spacingAndGlyphs">y: CIE31</text>
<text x="911.3" y="801.4" font-size="16.40" fill="#f0f0f0" text-anchor="start" font-weight="normal">0,22</text>
<text x="989.7" y="801.4" font-size="16.40" fill="#f0f0f0" text-anchor="start" font-weight="normal">0,31</text>
<text x="1058.3" y="801.4" font-size="16.40" fill="#f0f0f0" text-anchor="start" font-weight="normal">0,31</text>
<text x="1126.9" y="801.4" font-size="16.40" fill="#f0f0f0" text-anchor="start" font-weight="normal">0,32</text>
<text x="1195.5" y="801.4" font-size="16.40" fill="#f0f0f0" text-anchor="start" font-weight="normal">0,32</text>
<text x="1264.1" y="801.4" font-size="16.40" fill="#f0f0f0" text-anchor="start" font-weight="normal">0,32</text>
<text x="1332.7" y="801.4" font-size="16.40" fill="#f0f0f0" text-anchor="start" font-weight="normal">0,32</text>
<text x="1401.3" y="801.4" font-size="16.40" fill="#f0f0f0" text-anchor="start" font-weight="normal">0,32</text>
<text x="1469.9" y="801.4" font-size="16.40" fill="#f0f0f0" text-anchor="start" font-weight="normal">0,32</text>
<text x="1538.5" y="801.4" font-size="16.40" fill="#f0f0f0" text-anchor="start" font-weight="normal">0,32</text>
<text x="1607.1" y="801.4" font-size="16.40" fill="#f0f0f0" text-anchor="start" font-weight="normal">0,32</text>
<rect x="745.50" y="808.70" width="927.10" height="27.50" fill="#3d3d3d"/>
<text x="758.1" y="828.8" font-size="16.00" fill="#ffffff" text-anchor="start" font-weight="bold" textLength="10.0" lengthAdjust="spacingAndGlyphs">Y</text>
<text x="911.3" y="828.8" font-size="16.40" fill="#f0f0f0" text-anchor="start" font-weight="normal">0,26</text>
<text x="989.7" y="828.8" font-size="16.40" fill="#f0f0f0" text-anchor="start" font-weight="normal">2,02</text>
<text x="1058.3" y="828.8" font-size="16.40" fill="#f0f0f0" text-anchor="start" font-weight="normal">8,40</text>
<text x="1126.9" y="828.8" font-size="16.40" fill="#f0f0f0" text-anchor="start" font-weight="normal">20,02</text>
<text x="1195.5" y="828.8" font-size="16.40" fill="#f0f0f0" text-anchor="start" font-weight="normal">38,33</text>
<text x="1264.1" y="828.8" font-size="16.40" fill="#f0f0f0" text-anchor="start" font-weight="normal">63,65</text>
<text x="1332.7" y="828.8" font-size="16.40" fill="#f0f0f0" text-anchor="start" font-weight="normal">94,77</text>
<text x="1401.3" y="828.8" font-size="16.40" fill="#f0f0f0" text-anchor="start" font-weight="normal">133,41</text>
<text x="1469.9" y="828.8" font-size="16.40" fill="#f0f0f0" text-anchor="start" font-weight="normal">182,16</text>
<text x="1538.5" y="828.8" font-size="16.40" fill="#f0f0f0" text-anchor="start" font-weight="normal">238,80</text>
<text x="1607.1" y="828.8" font-size="16.40" fill="#f0f0f0" text-anchor="start" font-weight="normal">303,90</text>
<rect x="745.50" y="836.10" width="927.10" height="27.50" fill="#878787"/>
<text x="758.1" y="856.2" font-size="16.00" fill="#ffffff" text-anchor="start" font-weight="bold" textLength="66.5" lengthAdjust="spacingAndGlyphs">Target Y</text>
<text x="911.3" y="856.2" font-size="16.40" fill="#f0f0f0" text-anchor="start" font-weight="normal">0,00</text>
<text x="989.7" y="856.2" font-size="16.40" fill="#f0f0f0" text-anchor="start" font-weight="normal">3,14</text>
<text x="1058.3" y="856.2" font-size="16.40" fill="#f0f0f0" text-anchor="start" font-weight="normal">10,06</text>
<text x="1126.9" y="856.2" font-size="16.40" fill="#f0f0f0" text-anchor="start" font-weight="normal">21,96</text>
<text x="1195.5" y="856.2" font-size="16.40" fill="#f0f0f0" text-anchor="start" font-weight="normal">40,38</text>
<text x="1264.1" y="856.2" font-size="16.40" fill="#f0f0f0" text-anchor="start" font-weight="normal">65,60</text>
<text x="1332.7" y="856.2" font-size="16.40" fill="#f0f0f0" text-anchor="start" font-weight="normal">96,81</text>
<text x="1401.3" y="856.2" font-size="16.40" fill="#f0f0f0" text-anchor="start" font-weight="normal">135,30</text>
<text x="1469.9" y="856.2" font-size="16.40" fill="#f0f0f0" text-anchor="start" font-weight="normal">183,50</text>
<text x="1538.5" y="856.2" font-size="16.40" fill="#f0f0f0" text-anchor="start" font-weight="normal">240,47</text>
<text x="1607.1" y="856.2" font-size="16.40" fill="#f0f0f0" text-anchor="start" font-weight="normal">303,90</text>
<rect x="745.50" y="863.50" width="927.10" height="27.50" fill="#3d3d3d"/>
<text x="758.1" y="883.6" font-size="16.00" fill="#ffffff" text-anchor="start" font-weight="bold" textLength="134.9" lengthAdjust="spacingAndGlyphs">Gamma Log/Log</text>
<text x="911.3" y="883.6" font-size="16.40" fill="#f0f0f0" text-anchor="start" font-weight="normal">1,28</text>
<text x="989.7" y="883.6" font-size="16.40" fill="#f0f0f0" text-anchor="start" font-weight="normal">2,20</text>
<text x="1058.3" y="883.6" font-size="16.40" fill="#f0f0f0" text-anchor="start" font-weight="normal">2,23</text>
<text x="1126.9" y="883.6" font-size="16.40" fill="#f0f0f0" text-anchor="start" font-weight="normal">2,25</text>
<text x="1195.5" y="883.6" font-size="16.40" fill="#f0f0f0" text-anchor="start" font-weight="normal">2,26</text>
<text x="1264.1" y="883.6" font-size="16.40" fill="#f0f0f0" text-anchor="start" font-weight="normal">2,27</text>
<text x="1332.7" y="883.6" font-size="16.40" fill="#f0f0f0" text-anchor="start" font-weight="normal">2,28</text>
<text x="1401.3" y="883.6" font-size="16.40" fill="#f0f0f0" text-anchor="start" font-weight="normal">2,29</text>
<text x="1469.9" y="883.6" font-size="16.40" fill="#f0f0f0" text-anchor="start" font-weight="normal">2,29</text>
<text x="1538.5" y="883.6" font-size="16.40" fill="#f0f0f0" text-anchor="start" font-weight="normal">2,34</text>
<text x="1607.1" y="883.6" font-size="16.40" fill="#f0f0f0" text-anchor="start" font-weight="normal">2,27</text>
<rect x="745.50" y="890.90" width="927.10" height="27.50" fill="#878787"/>
<text x="758.1" y="911.0" font-size="16.00" fill="#ffffff" text-anchor="start" font-weight="bold" textLength="30.7" lengthAdjust="spacingAndGlyphs">CCT</text>
<text x="911.3" y="911.0" font-size="16.40" fill="#f0f0f0" text-anchor="start" font-weight="normal">43972,00</text>
<text x="989.7" y="911.0" font-size="16.40" fill="#f0f0f0" text-anchor="start" font-weight="normal">8374,00</text>
<text x="1058.3" y="911.0" font-size="16.40" fill="#f0f0f0" text-anchor="start" font-weight="normal">7864,00</text>
<text x="1126.9" y="911.0" font-size="16.40" fill="#f0f0f0" text-anchor="start" font-weight="normal">7809,00</text>
<text x="1195.5" y="911.0" font-size="16.40" fill="#f0f0f0" text-anchor="start" font-weight="normal">7795,00</text>
<text x="1264.1" y="911.0" font-size="16.40" fill="#f0f0f0" text-anchor="start" font-weight="normal">7797,00</text>
<text x="1332.7" y="911.0" font-size="16.40" fill="#f0f0f0" text-anchor="start" font-weight="normal">7803,00</text>
<text x="1401.3" y="911.0" font-size="16.40" fill="#f0f0f0" text-anchor="start" font-weight="normal">7800,00</text>
<text x="1469.9" y="911.0" font-size="16.40" fill="#f0f0f0" text-anchor="start" font-weight="normal">7813,00</text>
<text x="1538.5" y="911.0" font-size="16.40" fill="#f0f0f0" text-anchor="start" font-weight="normal">7833,00</text>
<text x="1607.1" y="911.0" font-size="16.40" fill="#f0f0f0" text-anchor="start" font-weight="normal">7843,00</text>
<rect x="745.50" y="918.30" width="927.10" height="27.50" fill="#3d3d3d"/>
<text x="758.1" y="938.4" font-size="16.00" fill="#ffffff" text-anchor="start" font-weight="bold" textLength="65.3" lengthAdjust="spacingAndGlyphs">ΔE 2000</text>
<text x="911.3" y="938.4" font-size="16.40" fill="#f0f0f0" text-anchor="start" font-weight="normal">1,77</text>
<text x="989.7" y="938.4" font-size="16.40" fill="#f0f0f0" text-anchor="start" font-weight="normal">2,89</text>
<text x="1058.3" y="938.4" font-size="16.40" fill="#f0f0f0" text-anchor="start" font-weight="normal">3,22</text>
<text x="1126.9" y="938.4" font-size="16.40" fill="#f0f0f0" text-anchor="start" font-weight="normal">3,81</text>
<text x="1195.5" y="938.4" font-size="16.40" fill="#f0f0f0" text-anchor="start" font-weight="normal">4,52</text>
<text x="1264.1" y="938.4" font-size="16.40" fill="#f0f0f0" text-anchor="start" font-weight="normal">5,21</text>
<text x="1332.7" y="938.4" font-size="16.40" fill="#f0f0f0" text-anchor="start" font-weight="normal">5,87</text>
<text x="1401.3" y="938.4" font-size="16.40" fill="#f0f0f0" text-anchor="start" font-weight="normal">6,47</text>
<text x="1469.9" y="938.4" font-size="16.40" fill="#f0f0f0" text-anchor="start" font-weight="normal">7,12</text>
<text x="1538.5" y="938.4" font-size="16.40" fill="#f0f0f0" text-anchor="start" font-weight="normal">7,76</text>
<text x="1607.1" y="938.4" font-size="16.40" fill="#f0f0f0" text-anchor="start" font-weight="normal">8,38</text>
<text x="945.6" y="745.6" font-size="16.00" fill="#ffffff" text-anchor="middle" font-weight="normal">0</text>
<text x="1019.1" y="745.6" font-size="16.00" fill="#ffffff" text-anchor="middle" font-weight="normal">10</text>
<text x="1087.7" y="745.6" font-size="16.00" fill="#ffffff" text-anchor="middle" font-weight="normal">20</text>
<text x="1156.3" y="745.6" font-size="16.00" fill="#ffffff" text-anchor="middle" font-weight="normal">30</text>
<text x="1224.9" y="745.6" font-size="16.00" fill="#ffffff" text-anchor="middle" font-weight="normal">40</text>
<text x="1293.5" y="745.6" font-size="16.00" fill="#ffffff" text-anchor="middle" font-weight="normal">50</text>
<text x="1362.1" y="745.6" font-size="16.00" fill="#ffffff" text-anchor="middle" font-weight="normal">60</text>
<text x="1430.7" y="745.6" font-size="16.00" fill="#ffffff" text-anchor="middle" font-weight="normal">70</text>
<text x="1499.3" y="745.6" font-size="16.00" fill="#ffffff" text-anchor="middle" font-weight="normal">80</text>
<text x="1567.9" y="745.6" font-size="16.00" fill="#ffffff" text-anchor="middle" font-weight="normal">90</text>
<text x="1636.5" y="745.6" font-size="16.00" fill="#ffffff" text-anchor="middle" font-weight="normal">100</text>
<rect x="0.00" y="966.00" width="1920.00" height="73.00" fill="#2c2c2c"/>
<rect x="1.2" y="969" width="139.8" height="68.4" rx="4" fill="url(#gBB)"/>
<rect x="7.4" y="974.6" width="128.2" height="40.8" rx="4.5" fill="#000000"/>
<rect x="7.4" y="974.6" width="128.2" height="40.8" rx="4.5" fill="url(#gSwShade)"/>
<text x="71.1" y="1032.9" font-size="12.20" fill="#2a2a2a" text-anchor="middle" font-weight="bold">0</text>
<rect x="143.1" y="969" width="139.8" height="68.4" rx="4" fill="url(#gBB)"/>
<rect x="149.3" y="974.6" width="128.2" height="40.8" rx="4.5" fill="#1a1a1a"/>
<rect x="149.3" y="974.6" width="128.2" height="40.8" rx="4.5" fill="url(#gSwShade)"/>
<text x="213.0" y="1032.9" font-size="12.20" fill="#2a2a2a" text-anchor="middle" font-weight="bold">10</text>
<rect x="284.9" y="969" width="139.8" height="68.4" rx="4" fill="url(#gBB)"/>
<rect x="291.1" y="974.6" width="128.2" height="40.8" rx="4.5" fill="#333333"/>
<rect x="291.1" y="974.6" width="128.2" height="40.8" rx="4.5" fill="url(#gSwShade)"/>
<text x="354.8" y="1032.9" font-size="12.20" fill="#2a2a2a" text-anchor="middle" font-weight="bold">20</text>
<rect x="426.8" y="969" width="139.8" height="68.4" rx="4" fill="url(#gBB)"/>
<rect x="433.0" y="974.6" width="128.2" height="40.8" rx="4.5" fill="#4c4c4c"/>
<rect x="433.0" y="974.6" width="128.2" height="40.8" rx="4.5" fill="url(#gSwShade)"/>
<text x="496.7" y="1032.9" font-size="12.20" fill="#2a2a2a" text-anchor="middle" font-weight="bold">30</text>
<rect x="568.6" y="969" width="139.8" height="68.4" rx="4" fill="url(#gBB)"/>
<rect x="574.8" y="974.6" width="128.2" height="40.8" rx="4.5" fill="#666666"/>
<rect x="574.8" y="974.6" width="128.2" height="40.8" rx="4.5" fill="url(#gSwShade)"/>
<text x="638.5" y="1032.9" font-size="12.20" fill="#2a2a2a" text-anchor="middle" font-weight="bold">40</text>
<rect x="710.5" y="969" width="139.8" height="68.4" rx="4" fill="url(#gBB)"/>
<rect x="716.7" y="974.6" width="128.2" height="40.8" rx="4.5" fill="#808080"/>
<rect x="716.7" y="974.6" width="128.2" height="40.8" rx="4.5" fill="url(#gSwShade)"/>
<text x="780.4" y="1032.9" font-size="12.20" fill="#2a2a2a" text-anchor="middle" font-weight="bold">50</text>
<rect x="852.4" y="969" width="139.8" height="68.4" rx="4" fill="url(#gBB)"/>
<rect x="858.6" y="974.6" width="128.2" height="40.8" rx="4.5" fill="#999999"/>
<rect x="858.6" y="974.6" width="128.2" height="40.8" rx="4.5" fill="url(#gSwShade)"/>
<text x="922.3" y="1032.9" font-size="12.20" fill="#2a2a2a" text-anchor="middle" font-weight="bold">60</text>
<rect x="994.2" y="969" width="139.8" height="68.4" rx="4" fill="url(#gBB)"/>
<rect x="1000.4" y="974.6" width="128.2" height="40.8" rx="4.5" fill="#b2b2b2"/>
<rect x="1000.4" y="974.6" width="128.2" height="40.8" rx="4.5" fill="url(#gSwShade)"/>
<text x="1064.1" y="1032.9" font-size="12.20" fill="#2a2a2a" text-anchor="middle" font-weight="bold">70</text>
<rect x="1136.1" y="969" width="139.8" height="68.4" rx="4" fill="url(#gBB)"/>
<rect x="1142.3" y="974.6" width="128.2" height="40.8" rx="4.5" fill="#cccccc"/>
<rect x="1142.3" y="974.6" width="128.2" height="40.8" rx="4.5" fill="url(#gSwShade)"/>
<text x="1206.0" y="1032.9" font-size="12.20" fill="#2a2a2a" text-anchor="middle" font-weight="bold">80</text>
<rect x="1277.9" y="969" width="139.8" height="68.4" rx="4" fill="url(#gBB)"/>
<rect x="1284.1" y="974.6" width="128.2" height="40.8" rx="4.5" fill="#e6e6e6"/>
<rect x="1284.1" y="974.6" width="128.2" height="40.8" rx="4.5" fill="url(#gSwShade)"/>
<text x="1347.8" y="1032.9" font-size="12.20" fill="#2a2a2a" text-anchor="middle" font-weight="bold">90</text>
<rect x="1419.8" y="969" width="139.8" height="68.4" rx="4" fill="url(#gBBsel)"/>
<rect x="1425.1" y="974" width="129.3" height="41.8" rx="4.5" fill="#ffffff"/>
<text x="1489.7" y="1032.9" font-size="12.20" fill="#ffffff" text-anchor="middle" font-weight="bold">100</text>
<rect x="1563.4" y="968.4" width="53.8" height="68.8" rx="4" fill="url(#gCtl)"/>
<line x1="1563.40" y1="989.50" x2="1617.20" y2="989.50" stroke="#3a3a3a" stroke-width="1.5"/>
<circle cx="1590.4" cy="978" r="8.5" fill="url(#gIco)"/>
<polygon points="1585.5,980.5 1595.5,980.5 1590.5,975" fill="#222"/>
<rect x="1574" y="997.5" width="33" height="32" rx="4" fill="#b4b4b4" stroke="#1e1e1e" stroke-width="2.2"/>
<rect x="1583" y="1006.5" width="15.5" height="15" fill="#050505"/>
<rect x="1619" y="968.4" width="301" height="33.8" fill="url(#gCtl)"/>
<rect x="1874.20" y="968.40" width="46.00" height="33.80" fill="#303030"/>
<line x1="1670.60" y1="968.40" x2="1670.60" y2="1002.20" stroke="#2a2a2a" stroke-width="1.8"/>
<line x1="1721.70" y1="968.40" x2="1721.70" y2="1002.20" stroke="#2a2a2a" stroke-width="1.8"/>
<line x1="1772.50" y1="968.40" x2="1772.50" y2="1002.20" stroke="#2a2a2a" stroke-width="1.8"/>
<line x1="1823.50" y1="968.40" x2="1823.50" y2="1002.20" stroke="#2a2a2a" stroke-width="1.8"/>
<line x1="1874.20" y1="968.40" x2="1874.20" y2="1002.20" stroke="#2a2a2a" stroke-width="1.8"/>
<circle cx="1644.4" cy="985.9" r="11.2" fill="url(#gIco)"/>
<circle cx="1696" cy="985.9" r="11.2" fill="url(#gIco)"/>
<circle cx="1747" cy="985.9" r="11.2" fill="url(#gIco)"/>
<circle cx="1798.2" cy="985.9" r="11.2" fill="url(#gIco)"/>
<circle cx="1848.8" cy="985.9" r="11.2" fill="url(#gIco)"/>
<circle cx="1900.5" cy="985.9" r="11.2" fill="#262626"/>
<rect x="1640" y="981.5" width="9" height="9" fill="#222"/>
<polygon points="1692.5,980 1692.5,992 1701.5,986" fill="#222"/>
<path d="M1744.2,980.8 H1741.8 V992 H1744.2 M1750.8,980.8 H1753.2 V992 H1750.8" fill="none" stroke="#222" stroke-width="2.2"/>
<rect x="1744.9" y="985.3" width="1.8" height="1.8" fill="#222"/><rect x="1748.3" y="985.3" width="1.8" height="1.8" fill="#222"/>
<ellipse cx="1794.6" cy="986" rx="3.5" ry="2.4" fill="none" stroke="#222" stroke-width="2"/><ellipse cx="1801.8" cy="986" rx="3.5" ry="2.4" fill="none" stroke="#222" stroke-width="2"/>
<path d="M1842.8,984.5 A6,6 0 0 1 1853.5,982 M1854.8,987.5 A6,6 0 0 1 1844,990" fill="none" stroke="#222" stroke-width="2.4"/>
<polygon points="1851,979.5 1856.5,980 1855,985" fill="#222"/><polygon points="1846.5,992.5 1841,992 1842.5,987" fill="#222"/>
<rect x="1619" y="1004" width="301" height="33.2" fill="url(#gCtl)"/>
<line x1="1772.50" y1="1004.00" x2="1772.50" y2="1037.20" stroke="#2a2a2a" stroke-width="1.8"/>
<line x1="1619.00" y1="1003.10" x2="1920.00" y2="1003.10" stroke="#2a2a2a" stroke-width="1.8"/>
<circle cx="1653.2" cy="1021" r="11.2" fill="url(#gIco)"/>
<circle cx="1894.9" cy="1021" r="11.2" fill="url(#gIco)"/>
<path d="M1651,1016.5 L1646.5,1021.5 L1651,1026.5 M1656.5,1016.5 L1652,1021.5 L1656.5,1026.5" fill="none" stroke="#2a2a2a" stroke-width="2"/>
<path d="M1890.5,1016.5 L1895,1021.5 L1890.5,1026.5 M1896,1016.5 L1900.5,1021.5 L1896,1026.5" fill="none" stroke="#2a2a2a" stroke-width="2"/>
<text x="1683.8" y="1029.8" font-size="25.00" fill="#2a2a2a" text-anchor="start" font-weight="bold" textLength="57.2" lengthAdjust="spacingAndGlyphs">Back</text>
<text x="1804.8" y="1029.8" font-size="25.00" fill="#2a2a2a" text-anchor="start" font-weight="bold" textLength="58.2" lengthAdjust="spacingAndGlyphs">Next</text></svg></body></html>
